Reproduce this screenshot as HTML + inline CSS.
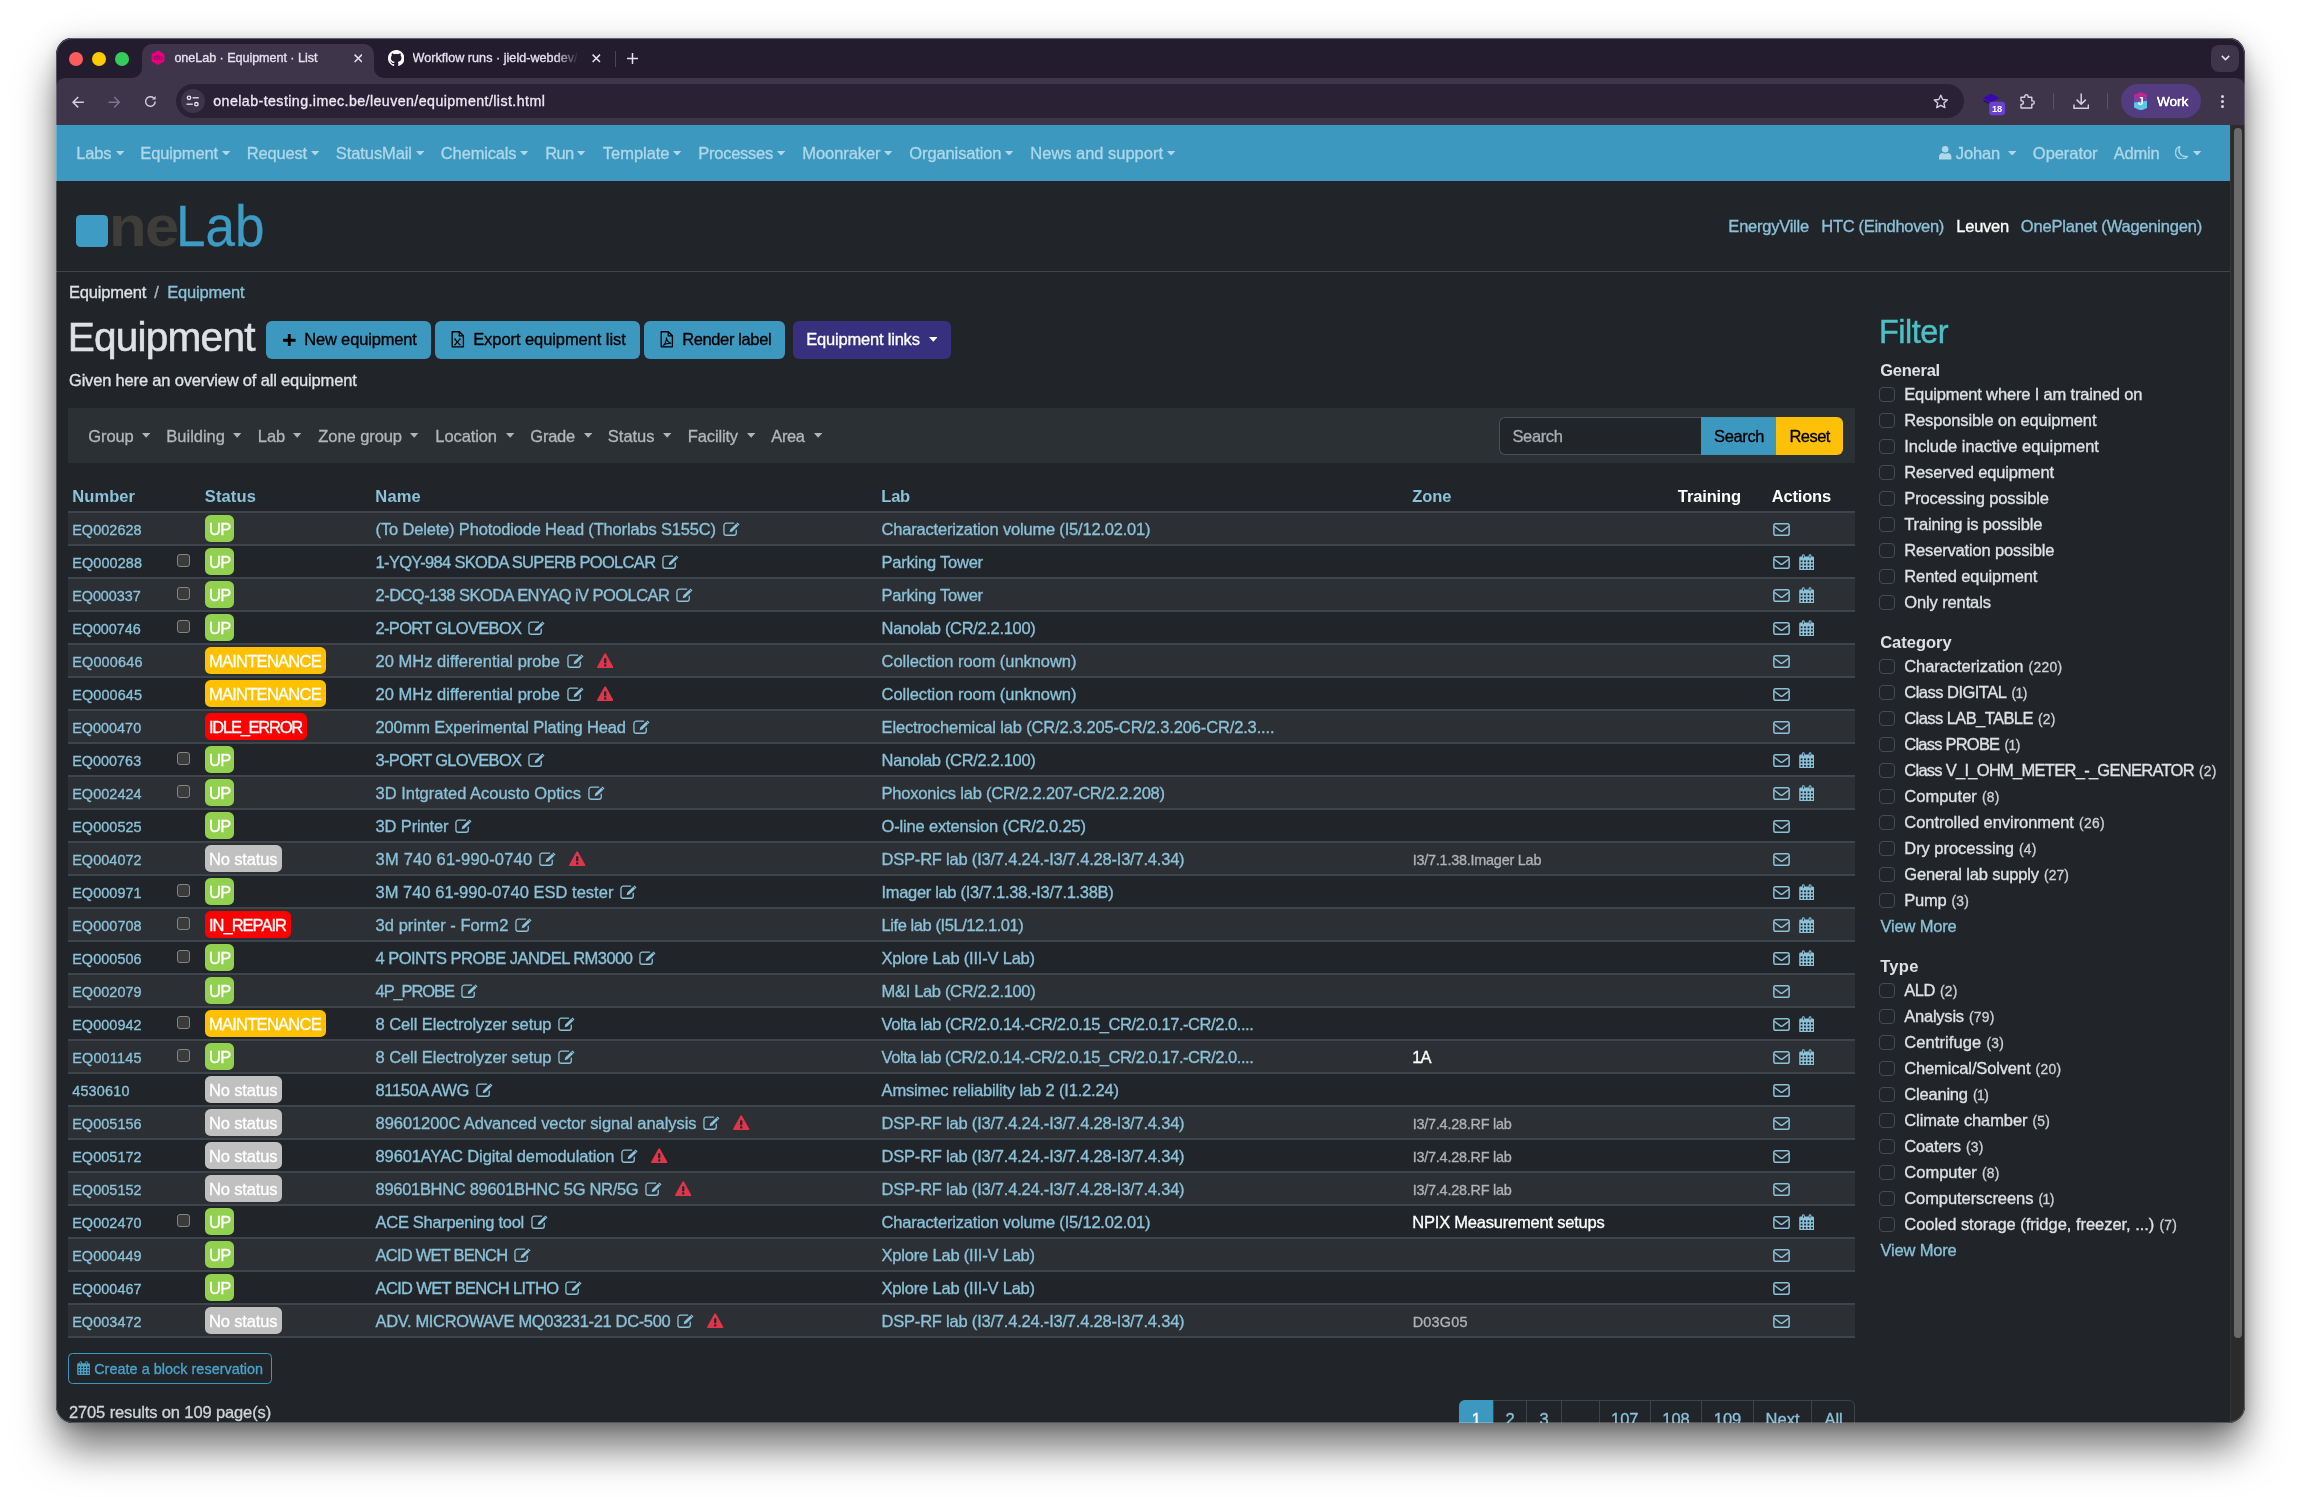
<!DOCTYPE html>
<html lang="en"><head><meta charset="utf-8"><title>oneLab · Equipment · List</title>
<style>
html,body{margin:0;padding:0;background:#fff;}
body{width:2301px;height:1497px;overflow:hidden;position:relative;font-family:"Liberation Sans",sans-serif;}
#shadow{position:absolute;left:56px;top:37.5px;width:2189px;height:1385.5px;border-radius:17px;background:#212529;
 box-shadow:0 28px 40px -2px rgba(0,0,0,.52),0 3px 12px rgba(0,0,0,.18),0 0 36px rgba(0,0,0,.08);}
#win{will-change:transform;position:absolute;left:0;top:0;width:2301px;height:1497px;overflow:hidden;
 clip-path:inset(37.5px 56px 74px 56px round 17px);}
#win div,#win .t,#win svg,#win table{position:absolute;}
.t{white-space:pre;margin:0;padding:0;font-weight:400;-webkit-text-stroke:.32px currentColor;}
a{text-decoration:none;}
.hl{left:68px;width:1787px;height:1px;background:#3f444a;border-top:1px solid rgba(65,70,76,.6);}
#rim{left:56px;top:37.5px;width:2189px;height:1385.5px;border-radius:17px;box-sizing:border-box;border:1px solid rgba(255,255,255,.23);pointer-events:none;}

</style></head>
<body>
<div id="shadow"></div>
<div id="win">
<div style="left:56px;top:37.5px;width:2189px;height:41px;background:#231b2e;"></div>
<div style="left:56px;top:37.5px;width:2189px;height:1px;background:rgba(255,255,255,.10);"></div>
<div style="left:56px;top:78px;width:2189px;height:47px;background:#3e354b;border-radius:9px 9px 0 0;"></div>
<div style="left:142.4px;top:44.2px;width:231.8px;height:34px;background:#3e354b;border-radius:10px 10px 0 0;"></div>
<svg style="left:132.4px;top:68px;" width="10" height="10" viewBox="0 0 10 10"><path d="M10 0v10H0A10 10 0 0 0 10 0z" fill="#3e354b"/></svg>
<svg style="left:374px;top:68px;" width="10" height="10" viewBox="0 0 10 10"><path d="M0 0v10h10A10 10 0 0 1 0 0z" fill="#3e354b"/></svg>
<div style="left:69.10000000000001px;top:51.5px;width:14.2px;height:14.2px;background:#fe5b5c;border-radius:50%;"></div>
<div style="left:92.0px;top:51.5px;width:14.2px;height:14.2px;background:#fbcb00;border-radius:50%;"></div>
<div style="left:114.9px;top:51.5px;width:14.2px;height:14.2px;background:#34cc5d;border-radius:50%;"></div>
<svg style="left:151.4px;top:50.2px;" width="14" height="15.4" viewBox="0 0 14 15.4"><path d="M7 .4 13.4 4v7.4L7 15 .6 11.4V4z" fill="#e6007e"/><text x="7" y="10.3" font-size="7.5" font-weight="700" text-anchor="middle" fill="#8e0a5c" font-family="Liberation Sans, sans-serif">db</text></svg>
<span class="t" style="left:174.40px;top:50px;font-size:12.6px;line-height:16px;color:#e6e1ee;letter-spacing:-0.051px;">oneLab · Equipment · List</span>
<svg style="left:353.6px;top:54.2px;" width="8.6" height="8.6" viewBox="0 0 8.6 8.6"><path d="M.6.6l7.4 7.4M8 .6L.6 8" stroke="#e6e1ee" stroke-width="1.5" fill="none"/></svg>
<svg style="left:388px;top:50.4px;" width="16.4" height="16.4" viewBox="0 0 16 16"><path fill="#fff" d="M8 0C3.58 0 0 3.58 0 8c0 3.54 2.29 6.53 5.47 7.59.4.07.55-.17.55-.38 0-.19-.01-.82-.01-1.49-2.01.37-2.53-.49-2.69-.94-.09-.23-.48-.94-.82-1.13-.28-.15-.68-.52-.01-.53.63-.01 1.08.58 1.23.82.72 1.21 1.87.87 2.33.66.07-.52.28-.87.51-1.07-1.78-.2-3.64-.89-3.64-3.95 0-.87.31-1.59.82-2.15-.08-.2-.36-1.02.08-2.12 0 0 .67-.21 2.2.82.64-.18 1.32-.27 2-.27s1.36.09 2 .27c1.53-1.04 2.2-.82 2.2-.82.44 1.1.16 1.92.08 2.12.51.56.82 1.27.82 2.15 0 3.07-1.87 3.75-3.65 3.95.29.25.54.73.54 1.48 0 1.07-.01 1.93-.01 2.2 0 .21.15.46.55.38A8.01 8.01 0 0 0 16 8c0-4.42-3.58-8-8-8z"/></svg>
<div style="left:412.5px;top:50px;width:166px;height:18px;overflow:hidden;-webkit-mask-image:linear-gradient(90deg,#000 86%,transparent 100%);mask-image:linear-gradient(90deg,#000 86%,transparent 100%);">
<span class="t" style="left:0.10px;top:0px;font-size:12.6px;line-height:16px;color:#e6e1ee;letter-spacing:0.024px;">Workflow runs · jield-webdev/</span>
</div>
<svg style="left:592.2px;top:54.2px;" width="8.6" height="8.6" viewBox="0 0 8.6 8.6"><path d="M.6.6l7.4 7.4M8 .6L.6 8" stroke="#e6e1ee" stroke-width="1.5" fill="none"/></svg>
<div style="left:614.5px;top:50.5px;width:1.2px;height:16px;background:#4d4459;"></div>
<svg style="left:626.5px;top:53px;" width="11" height="11" viewBox="0 0 11 11"><path d="M5.5 0v11M0 5.5h11" stroke="#e6e1ee" stroke-width="1.5" fill="none"/></svg>
<div style="left:2211px;top:44.6px;width:28px;height:27.6px;background:#3e354b;border-radius:8px;"></div>
<svg style="left:2220.5px;top:55.2px;" width="9" height="6" viewBox="0 0 9 6"><path d="M.8.9 4.5 4.6 8.2.9" stroke="#e6e1ee" stroke-width="1.5" fill="none"/></svg>
<svg style="left:72.2px;top:95.5px;" width="12.4" height="12.4" viewBox="0 0 12 12"><path d="M11.5 6H1.2M6 1 1 6l5 5" stroke="#d6cde3" stroke-width="1.45" fill="none"/></svg>
<svg style="left:107.8px;top:95.5px;" width="12.4" height="12.4" viewBox="0 0 12 12"><path d="M.5 6h10.3M6 1l5 5-5 5" stroke="#7d738c" stroke-width="1.45" fill="none"/></svg>
<svg style="left:143.6px;top:95px;" width="13" height="13" viewBox="0 0 13 13"><path d="M11.2 6.5A4.8 4.8 0 1 1 9.6 2.9" stroke="#d6cde3" stroke-width="1.45" fill="none"/><path d="M11.6.9v3.6H8z" fill="#d6cde3"/></svg>
<div style="left:176.4px;top:84.2px;width:1788px;height:33.4px;background:#2a2135;border-radius:17px;"></div>
<div style="left:180.9px;top:88.6px;width:24.4px;height:24.4px;background:#3e354b;border-radius:50%;"></div>
<svg style="left:186.4px;top:94.8px;" width="13.4" height="12" viewBox="0 0 13.4 12"><g stroke="#e6e1ee" stroke-width="1.35" fill="none"><circle cx="3" cy="2.8" r="1.7"/><path d="M6.6 2.8h6.2"/><circle cx="10.4" cy="9.2" r="1.7"/><path d="M.6 9.2h6.2"/></g></svg>
<span class="t" style="left:213.29px;top:92px;font-size:14.2px;line-height:18px;color:#ece8f2;letter-spacing:0.434px;">onelab-testing.imec.be/leuven/equipment/list.html</span>
<svg style="left:1933px;top:93.6px;" width="15.6" height="15" viewBox="0 0 15.6 15"><path d="M7.8 1.2l1.95 4.3 4.65.5-3.5 3.1 1 4.6-4.1-2.4-4.1 2.4 1-4.6L1.2 6l4.65-.5z" stroke="#d6cde3" stroke-width="1.35" fill="none" stroke-linejoin="round"/></svg>
<svg style="left:1982px;top:92.5px;" width="24" height="23" viewBox="0 0 24 23"><path d="M9 .8 17.4 5 9 9.4 .8 5z" fill="#3a06b4"/><path d="M2.6 6.9.8 8l8.2 4.3 3-1.6v-1.5L9 10.7z" fill="#2b0a86"/><rect x="7.2" y="8.7" width="15.8" height="13.6" rx="3" fill="#6b41d3"/><text x="15.1" y="19" font-size="9.3" font-weight="700" text-anchor="middle" fill="#fff" font-family="Liberation Sans, sans-serif">18</text></svg>
<svg style="left:2019px;top:92.6px;" width="17" height="17" viewBox="0 0 17 17"><path d="M2 4.2h3.7V3.4a1.7 1.7 0 0 1 3.4 0v.8h3.7v3.7h.8a1.7 1.7 0 0 1 0 3.4h-.8V15H2v-3.6h.6a1.8 1.8 0 0 0 0-3.6H2z" stroke="#d6cde3" stroke-width="1.4" fill="none" stroke-linejoin="round"/></svg>
<div style="left:2053.2px;top:93.4px;width:1.2px;height:15.6px;background:#5b516b;"></div>
<svg style="left:2072.6px;top:93px;" width="16.4" height="16.4" viewBox="0 0 16.4 16.4"><g stroke="#d6cde3" stroke-width="1.5" fill="none"><path d="M8.2.6v10.4M3.6 6.6l4.6 4.6 4.6-4.6"/><path d="M1 11.6v3.6h14.4v-3.6"/></g></svg>
<div style="left:2107px;top:93.4px;width:1.2px;height:15.6px;background:#5b516b;"></div>
<div style="left:2121px;top:84.2px;width:79.8px;height:34px;background:#533c80;border-radius:17px;"></div>
<svg style="left:2133.8px;top:91.8px;" width="13.6" height="18.6" viewBox="0 0 13.6 18.6"><path d="M6.8 0l6.8 3v5.6L0 10.4V3z" fill="#c2268f"/><path d="M0 5.4l13.6-1.2v4.4L0 10.4z" fill="#7f3fa6"/><path d="M0 10.4l13.6-1.8v7.2l-6.8 2.8L0 15.6z" fill="#58c8e6"/><text x="6.6" y="13.1" font-size="10.5" font-weight="700" text-anchor="middle" fill="#fff" font-family="Liberation Sans, sans-serif">J</text></svg>
<span class="t" style="left:2157.09px;top:93px;font-size:13.6px;line-height:17px;color:#fff;letter-spacing:-0.098px;text-shadow:0 0 .4px #fff;">Work</span>
<div style="left:2221.1px;top:94.6px;width:3px;height:3px;background:#ddd5ea;border-radius:50%;"></div>
<div style="left:2221.1px;top:100.0px;width:3px;height:3px;background:#ddd5ea;border-radius:50%;"></div>
<div style="left:2221.1px;top:105.4px;width:3px;height:3px;background:#ddd5ea;border-radius:50%;"></div>
<div style="left:2230px;top:125px;width:16px;height:1299px;background:#2b2b2b;"></div>
<div style="left:2230px;top:125px;width:1px;height:1299px;background:#353535;"></div>
<div style="left:2233.9px;top:128px;width:7.9px;height:1209.5px;background:#6b6b6b;border-radius:4px;"></div>
<div style="left:56px;top:125px;width:2174px;height:1299px;background:#212529;"></div>
<div style="left:56px;top:125px;width:2174px;height:56px;background:#3d98c0;"></div>
<span class="t" style="left:76.37px;top:143px;font-size:16.5px;line-height:20px;color:#afd7e8;letter-spacing:-0.176px;">Labs</span>
<svg style="left:115.85px;top:150.55px;" width="8.3" height="4.7" viewBox="0 0 8.3 4.7"><path d="M0 0h8.3L4.15 4.7z" fill="#afd7e8"/></svg>
<span class="t" style="left:140.37px;top:143px;font-size:16.5px;line-height:20px;color:#afd7e8;letter-spacing:-0.146px;">Equipment</span>
<svg style="left:221.85px;top:150.55px;" width="8.3" height="4.7" viewBox="0 0 8.3 4.7"><path d="M0 0h8.3L4.15 4.7z" fill="#afd7e8"/></svg>
<span class="t" style="left:246.87px;top:143px;font-size:16.5px;line-height:20px;color:#afd7e8;letter-spacing:-0.199px;">Request</span>
<svg style="left:310.85px;top:150.55px;" width="8.3" height="4.7" viewBox="0 0 8.3 4.7"><path d="M0 0h8.3L4.15 4.7z" fill="#afd7e8"/></svg>
<span class="t" style="left:335.87px;top:143px;font-size:16.5px;line-height:20px;color:#afd7e8;letter-spacing:-0.095px;">StatusMail</span>
<svg style="left:415.85px;top:150.55px;" width="8.3" height="4.7" viewBox="0 0 8.3 4.7"><path d="M0 0h8.3L4.15 4.7z" fill="#afd7e8"/></svg>
<span class="t" style="left:440.87px;top:143px;font-size:16.5px;line-height:20px;color:#afd7e8;letter-spacing:-0.162px;">Chemicals</span>
<svg style="left:520.35px;top:150.55px;" width="8.3" height="4.7" viewBox="0 0 8.3 4.7"><path d="M0 0h8.3L4.15 4.7z" fill="#afd7e8"/></svg>
<span class="t" style="left:545.37px;top:143px;font-size:16.5px;line-height:20px;color:#afd7e8;letter-spacing:-0.735px;">Run</span>
<svg style="left:577.35px;top:150.55px;" width="8.3" height="4.7" viewBox="0 0 8.3 4.7"><path d="M0 0h8.3L4.15 4.7z" fill="#afd7e8"/></svg>
<span class="t" style="left:602.87px;top:143px;font-size:16.5px;line-height:20px;color:#afd7e8;letter-spacing:-0.047px;">Template</span>
<svg style="left:673.35px;top:150.55px;" width="8.3" height="4.7" viewBox="0 0 8.3 4.7"><path d="M0 0h8.3L4.15 4.7z" fill="#afd7e8"/></svg>
<span class="t" style="left:698.37px;top:143px;font-size:16.5px;line-height:20px;color:#afd7e8;letter-spacing:-0.273px;">Processes</span>
<svg style="left:776.85px;top:150.55px;" width="8.3" height="4.7" viewBox="0 0 8.3 4.7"><path d="M0 0h8.3L4.15 4.7z" fill="#afd7e8"/></svg>
<span class="t" style="left:802.37px;top:143px;font-size:16.5px;line-height:20px;color:#afd7e8;letter-spacing:-0.089px;">Moonraker</span>
<svg style="left:884.35px;top:150.55px;" width="8.3" height="4.7" viewBox="0 0 8.3 4.7"><path d="M0 0h8.3L4.15 4.7z" fill="#afd7e8"/></svg>
<span class="t" style="left:909.37px;top:143px;font-size:16.5px;line-height:20px;color:#afd7e8;letter-spacing:-0.124px;">Organisation</span>
<svg style="left:1005.35px;top:150.55px;" width="8.3" height="4.7" viewBox="0 0 8.3 4.7"><path d="M0 0h8.3L4.15 4.7z" fill="#afd7e8"/></svg>
<span class="t" style="left:1030.37px;top:143px;font-size:16.5px;line-height:20px;color:#afd7e8;letter-spacing:-0.026px;">News and support</span>
<svg style="left:1166.85px;top:150.55px;" width="8.3" height="4.7" viewBox="0 0 8.3 4.7"><path d="M0 0h8.3L4.15 4.7z" fill="#afd7e8"/></svg>
<svg style="left:1939.2px;top:146.2px;" width="12.4" height="13.4" viewBox="0 0 12.4 13.4"><circle cx="6.2" cy="3.3" r="3.3" fill="#afd7e8"/><path d="M0 13.4v-2.6C0 8.4 1.7 6.9 3.6 6.9c.7.5 1.6.8 2.6.8s1.9-.3 2.6-.8c1.9 0 3.6 1.5 3.6 3.9v2.6z" fill="#afd7e8"/></svg>
<span class="t" style="left:1955.87px;top:143px;font-size:16.5px;line-height:20px;color:#afd7e8;letter-spacing:-0.178px;">Johan</span>
<svg style="left:2007.85px;top:150.55px;" width="8.3" height="4.7" viewBox="0 0 8.3 4.7"><path d="M0 0h8.3L4.15 4.7z" fill="#afd7e8"/></svg>
<span class="t" style="left:2032.87px;top:143px;font-size:16.5px;line-height:20px;color:#afd7e8;letter-spacing:-0.068px;">Operator</span>
<span class="t" style="left:2113.87px;top:143px;font-size:16.5px;line-height:20px;color:#afd7e8;letter-spacing:-0.241px;">Admin</span>
<svg style="left:2175px;top:145.6px;" width="13.6" height="13.6" viewBox="0 0 16 16"><path fill="#afd7e8" stroke="#afd7e8" stroke-width=".7" d="M6 .278a.77.77 0 0 1 .08.858 7.2 7.2 0 0 0-.878 3.46c0 4.021 3.278 7.277 7.318 7.277q.792-.001 1.533-.16a.79.79 0 0 1 .81.316.73.73 0 0 1-.031.893A8.35 8.35 0 0 1 8.344 16C3.734 16 0 12.286 0 7.71 0 4.266 2.114 1.312 5.124.06A.75.75 0 0 1 6 .278M4.858 1.311A7.27 7.27 0 0 0 1.025 7.71c0 4.02 3.279 7.276 7.319 7.276a7.32 7.32 0 0 0 5.205-2.162q-.506.063-1.029.063c-4.61 0-8.343-3.714-8.343-8.29 0-1.167.242-2.278.681-3.286"/></svg>
<svg style="left:2193.35px;top:150.55px;" width="8.3" height="4.7" viewBox="0 0 8.3 4.7"><path d="M0 0h8.3L4.15 4.7z" fill="#afd7e8"/></svg>
<div style="left:76px;top:214.6px;width:32px;height:32px;background:#3d9bc4;border-radius:4.5px;"></div>
<span class="t" style="left:108.80px;top:193px;font-size:57.5px;line-height:66px;color:#3f3d3a;font-weight:700;-webkit-text-stroke:0;transform:scaleX(1.07);transform-origin:0 0;letter-spacing:-1.5px;">ne</span>
<span class="t" style="left:176.40px;top:193px;font-size:57.2px;line-height:66px;color:#3d9bc4;transform:scaleX(.927);transform-origin:0 0;">Lab</span>
<span class="t" style="left:1728.37px;top:216px;font-size:16.5px;line-height:20px;color:#8bc1d9;letter-spacing:-0.236px;">EnergyVille</span>
<span class="t" style="left:1821.37px;top:216px;font-size:16.5px;line-height:20px;color:#8bc1d9;letter-spacing:-0.326px;">HTC (Eindhoven)</span>
<span class="t" style="left:1956.37px;top:216px;font-size:16.5px;line-height:20px;color:#fff;letter-spacing:-0.261px;">Leuven</span>
<span class="t" style="left:2020.87px;top:216px;font-size:16.5px;line-height:20px;color:#8bc1d9;letter-spacing:-0.205px;">OnePlanet (Wageningen)</span>
<div style="left:56px;top:270.5px;width:2174px;height:1px;background:#41464b;"></div>
<span class="t" style="left:68.97px;top:282px;font-size:16.5px;line-height:20px;color:#dee2e6;letter-spacing:-0.190px;">Equipment</span>
<span class="t" style="left:154.20px;top:282px;font-size:16.5px;line-height:20px;color:#adb5bd;">/</span>
<span class="t" style="left:167.27px;top:282px;font-size:16.5px;line-height:20px;color:#8bc1d9;letter-spacing:-0.190px;">Equipment</span>
<h1 class="t" style="left:67.68px;top:313px;font-size:40.6px;line-height:48px;color:#dee2e6;letter-spacing:-0.775px;-webkit-text-stroke:.55px #dee2e6;">Equipment</h1>
<div style="left:266px;top:320.5px;width:165px;height:38px;background:#3d98c0;border-radius:6px;"></div>
<span class="t" style="left:304.17px;top:329px;font-size:16.5px;line-height:20px;color:#000;letter-spacing:-0.160px;">New equipment</span>
<svg style="left:283.2px;top:333.6px;" width="12.6" height="12.6" viewBox="0 0 12.6 12.6"><path d="M6.3 0v12.6M0 6.3h12.6" stroke="#000" stroke-width="2.9"/></svg>
<div style="left:435px;top:320.5px;width:205px;height:38px;background:#3d98c0;border-radius:6px;"></div>
<span class="t" style="left:473.17px;top:329px;font-size:16.5px;line-height:20px;color:#000;letter-spacing:-0.071px;">Export equipment list</span>
<div style="left:644px;top:320.5px;width:141px;height:38px;background:#3d98c0;border-radius:6px;"></div>
<span class="t" style="left:682.17px;top:329px;font-size:16.5px;line-height:20px;color:#000;letter-spacing:-0.374px;">Render label</span>
<svg style="left:451px;top:331.2px;" width="13.6" height="16.6" viewBox="0 0 12.6 15.4"><path d="M1.1.7h6.7l3.7 3.7v10.3H1.1z" stroke="#000" stroke-width="1.2" fill="none" stroke-linejoin="round"/><path d="M7.6.9v3.7h3.7" stroke="#000" stroke-width="1.1" fill="none"/><path d="M3.6 7.6l4.6 5.2M8.2 7.6l-4.6 5.2M3 7.6h1.6M7.4 7.6H9M3 12.8h1.6M7.4 12.8H9" stroke="#000" stroke-width="1.05" fill="none"/></svg>
<svg style="left:660px;top:331.2px;" width="13.6" height="16.6" viewBox="0 0 12.6 15.4"><path d="M1.1.7h6.7l3.7 3.7v10.3H1.1z" stroke="#000" stroke-width="1.2" fill="none" stroke-linejoin="round"/><path d="M7.6.9v3.7h3.7" stroke="#000" stroke-width="1.1" fill="none"/><path d="M5.9 6.2c.5 2.4 1.6 4.4 4.2 5.2-2.300-.2-5.200.6-7.200 2.100 1.700-1.400 3.100-4.500 3-7.300z" stroke="#000" stroke-width=".95" fill="none" stroke-linejoin="round"/></svg>
<div style="left:793px;top:320.5px;width:158px;height:38px;background:#37307e;border-radius:6px;"></div>
<span class="t" style="left:806.17px;top:329px;font-size:16.5px;line-height:20px;color:#fff;letter-spacing:-0.194px;">Equipment links</span>
<svg style="left:928.7px;top:336.95px;" width="8.6" height="4.7" viewBox="0 0 8.6 4.7"><path d="M0 0h8.6L4.3 4.7z" fill="#fff"/></svg>
<span class="t" style="left:68.97px;top:370px;font-size:16.5px;line-height:20px;color:#dee2e6;letter-spacing:-0.175px;">Given here an overview of all equipment</span>
<div style="left:68px;top:408px;width:1787px;height:55px;background:#2b3035;"></div>
<span class="t" style="left:88.37px;top:426px;font-size:16.5px;line-height:20px;color:#b2b5b8;letter-spacing:-0.156px;">Group</span>
<svg style="left:141.85px;top:433.15px;" width="8.3" height="4.7" viewBox="0 0 8.3 4.7"><path d="M0 0h8.3L4.15 4.7z" fill="#b2b5b8"/></svg>
<span class="t" style="left:166.37px;top:426px;font-size:16.5px;line-height:20px;color:#b2b5b8;letter-spacing:-0.018px;">Building</span>
<svg style="left:233.35px;top:433.15px;" width="8.3" height="4.7" viewBox="0 0 8.3 4.7"><path d="M0 0h8.3L4.15 4.7z" fill="#b2b5b8"/></svg>
<span class="t" style="left:257.87px;top:426px;font-size:16.5px;line-height:20px;color:#b2b5b8;letter-spacing:-0.151px;">Lab</span>
<svg style="left:293.35px;top:433.15px;" width="8.3" height="4.7" viewBox="0 0 8.3 4.7"><path d="M0 0h8.3L4.15 4.7z" fill="#b2b5b8"/></svg>
<span class="t" style="left:318.37px;top:426px;font-size:16.5px;line-height:20px;color:#b2b5b8;letter-spacing:-0.083px;">Zone group</span>
<svg style="left:410.35px;top:433.15px;" width="8.3" height="4.7" viewBox="0 0 8.3 4.7"><path d="M0 0h8.3L4.15 4.7z" fill="#b2b5b8"/></svg>
<span class="t" style="left:435.37px;top:426px;font-size:16.5px;line-height:20px;color:#b2b5b8;letter-spacing:-0.102px;">Location</span>
<svg style="left:505.85px;top:433.15px;" width="8.3" height="4.7" viewBox="0 0 8.3 4.7"><path d="M0 0h8.3L4.15 4.7z" fill="#b2b5b8"/></svg>
<span class="t" style="left:530.37px;top:426px;font-size:16.5px;line-height:20px;color:#b2b5b8;letter-spacing:-0.256px;">Grade</span>
<svg style="left:583.85px;top:433.15px;" width="8.3" height="4.7" viewBox="0 0 8.3 4.7"><path d="M0 0h8.3L4.15 4.7z" fill="#b2b5b8"/></svg>
<span class="t" style="left:607.87px;top:426px;font-size:16.5px;line-height:20px;color:#b2b5b8;letter-spacing:-0.034px;">Status</span>
<svg style="left:662.85px;top:433.15px;" width="8.3" height="4.7" viewBox="0 0 8.3 4.7"><path d="M0 0h8.3L4.15 4.7z" fill="#b2b5b8"/></svg>
<span class="t" style="left:687.87px;top:426px;font-size:16.5px;line-height:20px;color:#b2b5b8;letter-spacing:-0.158px;">Facility</span>
<svg style="left:746.85px;top:433.15px;" width="8.3" height="4.7" viewBox="0 0 8.3 4.7"><path d="M0 0h8.3L4.15 4.7z" fill="#b2b5b8"/></svg>
<span class="t" style="left:771.37px;top:426px;font-size:16.5px;line-height:20px;color:#b2b5b8;letter-spacing:-0.445px;">Area</span>
<svg style="left:813.85px;top:433.15px;" width="8.3" height="4.7" viewBox="0 0 8.3 4.7"><path d="M0 0h8.3L4.15 4.7z" fill="#b2b5b8"/></svg>
<div style="left:1499px;top:416.5px;width:202.5px;height:38.2px;background:#212529;border:1px solid #495057;border-right:0;border-radius:6px 0 0 6px;box-sizing:border-box;"></div>
<span class="t" style="left:1512.47px;top:426px;font-size:16.5px;line-height:20px;color:#a9aeb3;letter-spacing:-0.367px;">Search</span>
<div style="left:1701px;top:416.5px;width:75.5px;height:38.2px;background:#3d98c0;"></div>
<span class="t" style="left:1714.07px;top:426px;font-size:16.5px;line-height:20px;color:#000;letter-spacing:-0.367px;">Search</span>
<div style="left:1776.3px;top:416.5px;width:67px;height:38.2px;background:#ffc107;border-radius:0 6px 6px 0;"></div>
<span class="t" style="left:1789.47px;top:426px;font-size:16.5px;line-height:20px;color:#000;letter-spacing:-0.546px;">Reset</span>
<b class="t" style="left:72.37px;top:486px;font-size:16.5px;line-height:20px;color:#8bc1d9;font-weight:700;-webkit-text-stroke:0;letter-spacing:0.039px;">Number</b>
<b class="t" style="left:204.87px;top:486px;font-size:16.5px;line-height:20px;color:#8bc1d9;font-weight:700;-webkit-text-stroke:0;letter-spacing:0.107px;">Status</b>
<b class="t" style="left:375.37px;top:486px;font-size:16.5px;line-height:20px;color:#8bc1d9;font-weight:700;-webkit-text-stroke:0;letter-spacing:0.156px;">Name</b>
<b class="t" style="left:881.37px;top:486px;font-size:16.5px;line-height:20px;color:#8bc1d9;font-weight:700;-webkit-text-stroke:0;letter-spacing:-0.255px;">Lab</b>
<b class="t" style="left:1412.37px;top:486px;font-size:16.5px;line-height:20px;color:#8bc1d9;font-weight:700;-webkit-text-stroke:0;letter-spacing:-0.086px;">Zone</b>
<b class="t" style="left:1677.87px;top:486px;font-size:16.5px;line-height:20px;color:#fff;font-weight:700;-webkit-text-stroke:0;letter-spacing:-0.137px;">Training</b>
<b class="t" style="left:1771.87px;top:486px;font-size:16.5px;line-height:20px;color:#fff;font-weight:700;-webkit-text-stroke:0;letter-spacing:-0.205px;">Actions</b>
<div class="hl" style="top:511px"></div>
<div style="left:68px;top:513px;width:1787px;height:32px;background:#2c3034;"></div>
<div class="hl" style="top:544px"></div>
<span class="t" style="left:72.18px;top:521px;font-size:14.4px;line-height:18px;color:#8bc1d9;letter-spacing:0.086px;">EQ002628</span>
<div style="left:205px;top:515px;width:29.2px;height:27px;background:#92d050;border-radius:5.6px;"></div>
<span class="t" style="left:208.97px;top:519px;font-size:16.5px;line-height:20px;color:#fff;letter-spacing:-0.722px;">UP</span>
<span class="t" style="left:375.57px;top:519px;font-size:16.5px;line-height:20px;color:#8bc1d9;letter-spacing:-0.165px;">(To Delete) Photodiode Head (Thorlabs S155C)</span>
<svg style="left:722.75px;top:521.8px;" width="17" height="14" viewBox="0 0 17 14"><path d="M10.600 1.150H3.300A2.350 2.350 0 0 0 .95 3.500v7.400a2.350 2.350 0 0 0 2.350 2.350h7.600a2.350 2.350 0 0 0 2.350-2.350V8.200" stroke="#8bc1d9" stroke-width="1.3" fill="none" stroke-linecap="round"/><path d="M14.500.400l2 2-7.200 7.200-2.700.700.700-2.700z" fill="#8bc1d9"/><path d="M13.400 1.600l1.900 1.900" stroke="#262a2e" stroke-width=".7"/></svg>
<span class="t" style="left:881.57px;top:519px;font-size:16.5px;line-height:20px;color:#8bc1d9;letter-spacing:-0.196px;">Characterization volume (I5/12.02.01)</span>
<svg style="left:1773.2px;top:523px;" width="17" height="13.2" viewBox="0 0 17 13.2"><rect x=".85" y=".85" width="15.3" height="11.5" rx="1.8" stroke="#8bc1d9" stroke-width="1.5" fill="none"/><path d="M1.2 3.2l6.2 4.7a1.9 1.9 0 0 0 2.2 0l6.2-4.7" stroke="#8bc1d9" stroke-width="1.4" fill="none"/></svg>
<div class="hl" style="top:577px"></div>
<span class="t" style="left:72.18px;top:554px;font-size:14.4px;line-height:18px;color:#8bc1d9;letter-spacing:0.149px;">EQ000288</span>
<div style="left:177.2px;top:554px;width:13px;height:13px;background:#3b3b3b;border:1px solid #858585;border-radius:3px;box-sizing:border-box;"></div>
<div style="left:205px;top:548px;width:29.2px;height:27px;background:#92d050;border-radius:5.6px;"></div>
<span class="t" style="left:208.97px;top:552px;font-size:16.5px;line-height:20px;color:#fff;letter-spacing:-0.722px;">UP</span>
<span class="t" style="left:375.57px;top:552px;font-size:16.5px;line-height:20px;color:#8bc1d9;letter-spacing:-0.679px;">1-YQY-984 SKODA SUPERB POOLCAR</span>
<svg style="left:662.25px;top:554.8px;" width="17" height="14" viewBox="0 0 17 14"><path d="M10.600 1.150H3.300A2.350 2.350 0 0 0 .95 3.500v7.400a2.350 2.350 0 0 0 2.350 2.350h7.600a2.350 2.350 0 0 0 2.350-2.350V8.200" stroke="#8bc1d9" stroke-width="1.3" fill="none" stroke-linecap="round"/><path d="M14.500.400l2 2-7.200 7.200-2.700.700.700-2.700z" fill="#8bc1d9"/><path d="M13.400 1.600l1.900 1.900" stroke="#262a2e" stroke-width=".7"/></svg>
<span class="t" style="left:881.57px;top:552px;font-size:16.5px;line-height:20px;color:#8bc1d9;letter-spacing:-0.225px;">Parking Tower</span>
<svg style="left:1773.2px;top:556px;" width="17" height="13.2" viewBox="0 0 17 13.2"><rect x=".85" y=".85" width="15.3" height="11.5" rx="1.8" stroke="#8bc1d9" stroke-width="1.5" fill="none"/><path d="M1.2 3.2l6.2 4.7a1.9 1.9 0 0 0 2.2 0l6.2-4.7" stroke="#8bc1d9" stroke-width="1.4" fill="none"/></svg>
<svg style="left:1798.6px;top:553.7px;" width="15.4" height="16.6" viewBox="0 0 15.4 16.6"><path d="M1.5 2.6h12.4a1.3 1.3 0 0 1 1.3 1.3v11.2a1.3 1.3 0 0 1-1.3 1.300H1.500A1.300 1.300 0 0 1 .2 15.100V3.900a1.300 1.300 0 0 1 1.300-1.300z" fill="#8bc1d9"/><rect x="3" y=".2" width="2.7" height="4.6" rx="1.3" fill="#8bc1d9"/><rect x="9.7" y=".2" width="2.7" height="4.6" rx="1.3" fill="#8bc1d9"/><rect x="3.95" y="1.3" width=".8" height="2.6" rx=".4" fill="#1b1e21"/><rect x="10.65" y="1.3" width=".8" height="2.6" rx=".4" fill="#1b1e21"/><rect x="1.70" y="6.40" width="1.75" height="1.75" fill="#1b1e21"/><rect x="5.15" y="6.40" width="1.75" height="1.75" fill="#1b1e21"/><rect x="8.60" y="6.40" width="1.75" height="1.75" fill="#1b1e21"/><rect x="12.05" y="6.40" width="1.75" height="1.75" fill="#1b1e21"/><rect x="1.70" y="9.70" width="1.75" height="1.75" fill="#1b1e21"/><rect x="5.15" y="9.70" width="1.75" height="1.75" fill="#1b1e21"/><rect x="8.60" y="9.70" width="1.75" height="1.75" fill="#1b1e21"/><rect x="12.05" y="9.70" width="1.75" height="1.75" fill="#1b1e21"/><rect x="1.70" y="13.00" width="1.75" height="1.75" fill="#1b1e21"/><rect x="5.15" y="13.00" width="1.75" height="1.75" fill="#1b1e21"/><rect x="8.60" y="13.00" width="1.75" height="1.75" fill="#1b1e21"/><rect x="12.05" y="13.00" width="1.75" height="1.75" fill="#1b1e21"/></svg>
<div style="left:68px;top:579px;width:1787px;height:32px;background:#2c3034;"></div>
<div class="hl" style="top:610px"></div>
<span class="t" style="left:72.18px;top:587px;font-size:14.4px;line-height:18px;color:#8bc1d9;letter-spacing:-0.039px;">EQ000337</span>
<div style="left:177.2px;top:587px;width:13px;height:13px;background:#3b3b3b;border:1px solid #858585;border-radius:3px;box-sizing:border-box;"></div>
<div style="left:205px;top:581px;width:29.2px;height:27px;background:#92d050;border-radius:5.6px;"></div>
<span class="t" style="left:208.97px;top:585px;font-size:16.5px;line-height:20px;color:#fff;letter-spacing:-0.722px;">UP</span>
<span class="t" style="left:375.57px;top:585px;font-size:16.5px;line-height:20px;color:#8bc1d9;letter-spacing:-0.551px;">2-DCQ-138 SKODA ENYAQ iV POOLCAR</span>
<svg style="left:676.25px;top:587.8px;" width="17" height="14" viewBox="0 0 17 14"><path d="M10.600 1.150H3.300A2.350 2.350 0 0 0 .95 3.500v7.400a2.350 2.350 0 0 0 2.350 2.350h7.600a2.350 2.350 0 0 0 2.350-2.350V8.200" stroke="#8bc1d9" stroke-width="1.3" fill="none" stroke-linecap="round"/><path d="M14.500.400l2 2-7.200 7.200-2.700.700.700-2.700z" fill="#8bc1d9"/><path d="M13.400 1.600l1.900 1.900" stroke="#262a2e" stroke-width=".7"/></svg>
<span class="t" style="left:881.57px;top:585px;font-size:16.5px;line-height:20px;color:#8bc1d9;letter-spacing:-0.225px;">Parking Tower</span>
<svg style="left:1773.2px;top:589px;" width="17" height="13.2" viewBox="0 0 17 13.2"><rect x=".85" y=".85" width="15.3" height="11.5" rx="1.8" stroke="#8bc1d9" stroke-width="1.5" fill="none"/><path d="M1.2 3.2l6.2 4.7a1.9 1.9 0 0 0 2.2 0l6.2-4.7" stroke="#8bc1d9" stroke-width="1.4" fill="none"/></svg>
<svg style="left:1798.6px;top:586.7px;" width="15.4" height="16.6" viewBox="0 0 15.4 16.6"><path d="M1.5 2.6h12.4a1.3 1.3 0 0 1 1.3 1.3v11.2a1.3 1.3 0 0 1-1.3 1.300H1.500A1.300 1.300 0 0 1 .2 15.100V3.900a1.300 1.300 0 0 1 1.300-1.300z" fill="#8bc1d9"/><rect x="3" y=".2" width="2.7" height="4.6" rx="1.3" fill="#8bc1d9"/><rect x="9.7" y=".2" width="2.7" height="4.6" rx="1.3" fill="#8bc1d9"/><rect x="3.95" y="1.3" width=".8" height="2.6" rx=".4" fill="#1b1e21"/><rect x="10.65" y="1.3" width=".8" height="2.6" rx=".4" fill="#1b1e21"/><rect x="1.70" y="6.40" width="1.75" height="1.75" fill="#1b1e21"/><rect x="5.15" y="6.40" width="1.75" height="1.75" fill="#1b1e21"/><rect x="8.60" y="6.40" width="1.75" height="1.75" fill="#1b1e21"/><rect x="12.05" y="6.40" width="1.75" height="1.75" fill="#1b1e21"/><rect x="1.70" y="9.70" width="1.75" height="1.75" fill="#1b1e21"/><rect x="5.15" y="9.70" width="1.75" height="1.75" fill="#1b1e21"/><rect x="8.60" y="9.70" width="1.75" height="1.75" fill="#1b1e21"/><rect x="12.05" y="9.70" width="1.75" height="1.75" fill="#1b1e21"/><rect x="1.70" y="13.00" width="1.75" height="1.75" fill="#1b1e21"/><rect x="5.15" y="13.00" width="1.75" height="1.75" fill="#1b1e21"/><rect x="8.60" y="13.00" width="1.75" height="1.75" fill="#1b1e21"/><rect x="12.05" y="13.00" width="1.75" height="1.75" fill="#1b1e21"/></svg>
<div class="hl" style="top:643px"></div>
<span class="t" style="left:72.18px;top:620px;font-size:14.4px;line-height:18px;color:#8bc1d9;letter-spacing:-0.039px;">EQ000746</span>
<div style="left:177.2px;top:620px;width:13px;height:13px;background:#3b3b3b;border:1px solid #858585;border-radius:3px;box-sizing:border-box;"></div>
<div style="left:205px;top:614px;width:29.2px;height:27px;background:#92d050;border-radius:5.6px;"></div>
<span class="t" style="left:208.97px;top:618px;font-size:16.5px;line-height:20px;color:#fff;letter-spacing:-0.722px;">UP</span>
<span class="t" style="left:375.57px;top:618px;font-size:16.5px;line-height:20px;color:#8bc1d9;letter-spacing:-0.692px;">2-PORT GLOVEBOX</span>
<svg style="left:528.25px;top:620.8px;" width="17" height="14" viewBox="0 0 17 14"><path d="M10.600 1.150H3.300A2.350 2.350 0 0 0 .95 3.500v7.400a2.350 2.350 0 0 0 2.350 2.350h7.600a2.350 2.350 0 0 0 2.350-2.350V8.200" stroke="#8bc1d9" stroke-width="1.3" fill="none" stroke-linecap="round"/><path d="M14.500.400l2 2-7.200 7.200-2.700.700.700-2.700z" fill="#8bc1d9"/><path d="M13.400 1.600l1.900 1.900" stroke="#262a2e" stroke-width=".7"/></svg>
<span class="t" style="left:881.57px;top:618px;font-size:16.5px;line-height:20px;color:#8bc1d9;letter-spacing:-0.334px;">Nanolab (CR/2.2.100)</span>
<svg style="left:1773.2px;top:622px;" width="17" height="13.2" viewBox="0 0 17 13.2"><rect x=".85" y=".85" width="15.3" height="11.5" rx="1.8" stroke="#8bc1d9" stroke-width="1.5" fill="none"/><path d="M1.2 3.2l6.2 4.7a1.9 1.9 0 0 0 2.2 0l6.2-4.7" stroke="#8bc1d9" stroke-width="1.4" fill="none"/></svg>
<svg style="left:1798.6px;top:619.7px;" width="15.4" height="16.6" viewBox="0 0 15.4 16.6"><path d="M1.5 2.6h12.4a1.3 1.3 0 0 1 1.3 1.3v11.2a1.3 1.3 0 0 1-1.3 1.300H1.500A1.300 1.300 0 0 1 .2 15.100V3.900a1.300 1.300 0 0 1 1.300-1.300z" fill="#8bc1d9"/><rect x="3" y=".2" width="2.7" height="4.6" rx="1.3" fill="#8bc1d9"/><rect x="9.7" y=".2" width="2.7" height="4.6" rx="1.3" fill="#8bc1d9"/><rect x="3.95" y="1.3" width=".8" height="2.6" rx=".4" fill="#1b1e21"/><rect x="10.65" y="1.3" width=".8" height="2.6" rx=".4" fill="#1b1e21"/><rect x="1.70" y="6.40" width="1.75" height="1.75" fill="#1b1e21"/><rect x="5.15" y="6.40" width="1.75" height="1.75" fill="#1b1e21"/><rect x="8.60" y="6.40" width="1.75" height="1.75" fill="#1b1e21"/><rect x="12.05" y="6.40" width="1.75" height="1.75" fill="#1b1e21"/><rect x="1.70" y="9.70" width="1.75" height="1.75" fill="#1b1e21"/><rect x="5.15" y="9.70" width="1.75" height="1.75" fill="#1b1e21"/><rect x="8.60" y="9.70" width="1.75" height="1.75" fill="#1b1e21"/><rect x="12.05" y="9.70" width="1.75" height="1.75" fill="#1b1e21"/><rect x="1.70" y="13.00" width="1.75" height="1.75" fill="#1b1e21"/><rect x="5.15" y="13.00" width="1.75" height="1.75" fill="#1b1e21"/><rect x="8.60" y="13.00" width="1.75" height="1.75" fill="#1b1e21"/><rect x="12.05" y="13.00" width="1.75" height="1.75" fill="#1b1e21"/></svg>
<div style="left:68px;top:645px;width:1787px;height:32px;background:#2c3034;"></div>
<div class="hl" style="top:676px"></div>
<span class="t" style="left:72.18px;top:653px;font-size:14.4px;line-height:18px;color:#8bc1d9;letter-spacing:0.211px;">EQ000646</span>
<div style="left:205px;top:647px;width:120.5px;height:27px;background:#ffc000;border-radius:5.6px;"></div>
<span class="t" style="left:208.97px;top:651px;font-size:16.5px;line-height:20px;color:#fff;letter-spacing:-0.738px;">MAINTENANCE</span>
<span class="t" style="left:375.57px;top:651px;font-size:16.5px;line-height:20px;color:#8bc1d9;letter-spacing:0.011px;">20 MHz differential probe</span>
<svg style="left:566.75px;top:653.8px;" width="17" height="14" viewBox="0 0 17 14"><path d="M10.600 1.150H3.300A2.350 2.350 0 0 0 .95 3.500v7.400a2.350 2.350 0 0 0 2.350 2.350h7.600a2.350 2.350 0 0 0 2.350-2.350V8.200" stroke="#8bc1d9" stroke-width="1.3" fill="none" stroke-linecap="round"/><path d="M14.500.400l2 2-7.200 7.200-2.700.700.700-2.700z" fill="#8bc1d9"/><path d="M13.400 1.600l1.900 1.900" stroke="#262a2e" stroke-width=".7"/></svg>
<svg style="left:596.8499999999999px;top:652.9px;" width="16.4" height="15.6" viewBox="0 0 16.4 15.6"><path d="M8.200 1.200L15.400 14.300H1z" fill="#e0354a" stroke="#e0354a" stroke-width="1.8" stroke-linejoin="round"/><rect x="7.050" y="5.200" width="2.300" height="5.100" rx=".5" fill="#24282c"/><rect x="7.050" y="11.300" width="2.300" height="2.100" rx=".4" fill="#24282c"/></svg>
<span class="t" style="left:881.57px;top:651px;font-size:16.5px;line-height:20px;color:#8bc1d9;letter-spacing:-0.058px;">Collection room (unknown)</span>
<svg style="left:1773.2px;top:655px;" width="17" height="13.2" viewBox="0 0 17 13.2"><rect x=".85" y=".85" width="15.3" height="11.5" rx="1.8" stroke="#8bc1d9" stroke-width="1.5" fill="none"/><path d="M1.2 3.2l6.2 4.7a1.9 1.9 0 0 0 2.2 0l6.2-4.7" stroke="#8bc1d9" stroke-width="1.4" fill="none"/></svg>
<div class="hl" style="top:709px"></div>
<span class="t" style="left:72.18px;top:686px;font-size:14.4px;line-height:18px;color:#8bc1d9;letter-spacing:0.149px;">EQ000645</span>
<div style="left:205px;top:680px;width:120.5px;height:27px;background:#ffc000;border-radius:5.6px;"></div>
<span class="t" style="left:208.97px;top:684px;font-size:16.5px;line-height:20px;color:#fff;letter-spacing:-0.738px;">MAINTENANCE</span>
<span class="t" style="left:375.57px;top:684px;font-size:16.5px;line-height:20px;color:#8bc1d9;letter-spacing:0.011px;">20 MHz differential probe</span>
<svg style="left:566.75px;top:686.8px;" width="17" height="14" viewBox="0 0 17 14"><path d="M10.600 1.150H3.300A2.350 2.350 0 0 0 .95 3.500v7.400a2.350 2.350 0 0 0 2.350 2.350h7.600a2.350 2.350 0 0 0 2.350-2.350V8.200" stroke="#8bc1d9" stroke-width="1.3" fill="none" stroke-linecap="round"/><path d="M14.500.400l2 2-7.200 7.200-2.700.700.700-2.700z" fill="#8bc1d9"/><path d="M13.400 1.600l1.900 1.900" stroke="#262a2e" stroke-width=".7"/></svg>
<svg style="left:596.8499999999999px;top:685.9px;" width="16.4" height="15.6" viewBox="0 0 16.4 15.6"><path d="M8.200 1.200L15.400 14.300H1z" fill="#e0354a" stroke="#e0354a" stroke-width="1.8" stroke-linejoin="round"/><rect x="7.050" y="5.200" width="2.300" height="5.100" rx=".5" fill="#24282c"/><rect x="7.050" y="11.300" width="2.300" height="2.100" rx=".4" fill="#24282c"/></svg>
<span class="t" style="left:881.57px;top:684px;font-size:16.5px;line-height:20px;color:#8bc1d9;letter-spacing:-0.058px;">Collection room (unknown)</span>
<svg style="left:1773.2px;top:688px;" width="17" height="13.2" viewBox="0 0 17 13.2"><rect x=".85" y=".85" width="15.3" height="11.5" rx="1.8" stroke="#8bc1d9" stroke-width="1.5" fill="none"/><path d="M1.2 3.2l6.2 4.7a1.9 1.9 0 0 0 2.2 0l6.2-4.7" stroke="#8bc1d9" stroke-width="1.4" fill="none"/></svg>
<div style="left:68px;top:711px;width:1787px;height:32px;background:#2c3034;"></div>
<div class="hl" style="top:742px"></div>
<span class="t" style="left:72.18px;top:719px;font-size:14.4px;line-height:18px;color:#8bc1d9;letter-spacing:0.024px;">EQ000470</span>
<div style="left:205px;top:713px;width:101.5px;height:27px;background:#ff0000;border-radius:5.6px;"></div>
<span class="t" style="left:208.97px;top:717px;font-size:16.5px;line-height:20px;color:#fff;letter-spacing:-1.248px;">IDLE_ERROR</span>
<span class="t" style="left:375.57px;top:717px;font-size:16.5px;line-height:20px;color:#8bc1d9;letter-spacing:-0.150px;">200mm Experimental Plating Head</span>
<svg style="left:632.75px;top:719.8px;" width="17" height="14" viewBox="0 0 17 14"><path d="M10.600 1.150H3.300A2.350 2.350 0 0 0 .95 3.500v7.400a2.350 2.350 0 0 0 2.350 2.350h7.600a2.350 2.350 0 0 0 2.350-2.350V8.200" stroke="#8bc1d9" stroke-width="1.3" fill="none" stroke-linecap="round"/><path d="M14.500.400l2 2-7.200 7.200-2.700.700.700-2.700z" fill="#8bc1d9"/><path d="M13.400 1.600l1.900 1.900" stroke="#262a2e" stroke-width=".7"/></svg>
<span class="t" style="left:881.57px;top:717px;font-size:16.5px;line-height:20px;color:#8bc1d9;letter-spacing:-0.150px;">Electrochemical lab (CR/2.3.205-CR/2.3.206-CR/2.3....</span>
<svg style="left:1773.2px;top:721px;" width="17" height="13.2" viewBox="0 0 17 13.2"><rect x=".85" y=".85" width="15.3" height="11.5" rx="1.8" stroke="#8bc1d9" stroke-width="1.5" fill="none"/><path d="M1.2 3.2l6.2 4.7a1.9 1.9 0 0 0 2.2 0l6.2-4.7" stroke="#8bc1d9" stroke-width="1.4" fill="none"/></svg>
<div class="hl" style="top:775px"></div>
<span class="t" style="left:72.18px;top:752px;font-size:14.4px;line-height:18px;color:#8bc1d9;letter-spacing:0.024px;">EQ000763</span>
<div style="left:177.2px;top:752px;width:13px;height:13px;background:#3b3b3b;border:1px solid #858585;border-radius:3px;box-sizing:border-box;"></div>
<div style="left:205px;top:746px;width:29.2px;height:27px;background:#92d050;border-radius:5.6px;"></div>
<span class="t" style="left:208.97px;top:750px;font-size:16.5px;line-height:20px;color:#fff;letter-spacing:-0.722px;">UP</span>
<span class="t" style="left:375.57px;top:750px;font-size:16.5px;line-height:20px;color:#8bc1d9;letter-spacing:-0.692px;">3-PORT GLOVEBOX</span>
<svg style="left:528.25px;top:752.8px;" width="17" height="14" viewBox="0 0 17 14"><path d="M10.600 1.150H3.300A2.350 2.350 0 0 0 .95 3.500v7.400a2.350 2.350 0 0 0 2.350 2.350h7.600a2.350 2.350 0 0 0 2.350-2.350V8.200" stroke="#8bc1d9" stroke-width="1.3" fill="none" stroke-linecap="round"/><path d="M14.500.400l2 2-7.200 7.200-2.700.700.700-2.700z" fill="#8bc1d9"/><path d="M13.400 1.600l1.900 1.900" stroke="#262a2e" stroke-width=".7"/></svg>
<span class="t" style="left:881.57px;top:750px;font-size:16.5px;line-height:20px;color:#8bc1d9;letter-spacing:-0.334px;">Nanolab (CR/2.2.100)</span>
<svg style="left:1773.2px;top:754px;" width="17" height="13.2" viewBox="0 0 17 13.2"><rect x=".85" y=".85" width="15.3" height="11.5" rx="1.8" stroke="#8bc1d9" stroke-width="1.5" fill="none"/><path d="M1.2 3.2l6.2 4.7a1.9 1.9 0 0 0 2.2 0l6.2-4.7" stroke="#8bc1d9" stroke-width="1.4" fill="none"/></svg>
<svg style="left:1798.6px;top:751.7px;" width="15.4" height="16.6" viewBox="0 0 15.4 16.6"><path d="M1.5 2.6h12.4a1.3 1.3 0 0 1 1.3 1.3v11.2a1.3 1.3 0 0 1-1.3 1.300H1.500A1.300 1.300 0 0 1 .2 15.100V3.900a1.300 1.300 0 0 1 1.300-1.300z" fill="#8bc1d9"/><rect x="3" y=".2" width="2.7" height="4.6" rx="1.3" fill="#8bc1d9"/><rect x="9.7" y=".2" width="2.7" height="4.6" rx="1.3" fill="#8bc1d9"/><rect x="3.95" y="1.3" width=".8" height="2.6" rx=".4" fill="#1b1e21"/><rect x="10.65" y="1.3" width=".8" height="2.6" rx=".4" fill="#1b1e21"/><rect x="1.70" y="6.40" width="1.75" height="1.75" fill="#1b1e21"/><rect x="5.15" y="6.40" width="1.75" height="1.75" fill="#1b1e21"/><rect x="8.60" y="6.40" width="1.75" height="1.75" fill="#1b1e21"/><rect x="12.05" y="6.40" width="1.75" height="1.75" fill="#1b1e21"/><rect x="1.70" y="9.70" width="1.75" height="1.75" fill="#1b1e21"/><rect x="5.15" y="9.70" width="1.75" height="1.75" fill="#1b1e21"/><rect x="8.60" y="9.70" width="1.75" height="1.75" fill="#1b1e21"/><rect x="12.05" y="9.70" width="1.75" height="1.75" fill="#1b1e21"/><rect x="1.70" y="13.00" width="1.75" height="1.75" fill="#1b1e21"/><rect x="5.15" y="13.00" width="1.75" height="1.75" fill="#1b1e21"/><rect x="8.60" y="13.00" width="1.75" height="1.75" fill="#1b1e21"/><rect x="12.05" y="13.00" width="1.75" height="1.75" fill="#1b1e21"/></svg>
<div style="left:68px;top:777px;width:1787px;height:32px;background:#2c3034;"></div>
<div class="hl" style="top:808px"></div>
<span class="t" style="left:72.18px;top:785px;font-size:14.4px;line-height:18px;color:#8bc1d9;letter-spacing:0.086px;">EQ002424</span>
<div style="left:177.2px;top:785px;width:13px;height:13px;background:#3b3b3b;border:1px solid #858585;border-radius:3px;box-sizing:border-box;"></div>
<div style="left:205px;top:779px;width:29.2px;height:27px;background:#92d050;border-radius:5.6px;"></div>
<span class="t" style="left:208.97px;top:783px;font-size:16.5px;line-height:20px;color:#fff;letter-spacing:-0.722px;">UP</span>
<span class="t" style="left:375.57px;top:783px;font-size:16.5px;line-height:20px;color:#8bc1d9;letter-spacing:-0.005px;">3D Intgrated Acousto Optics</span>
<svg style="left:587.75px;top:785.8px;" width="17" height="14" viewBox="0 0 17 14"><path d="M10.600 1.150H3.300A2.350 2.350 0 0 0 .95 3.500v7.400a2.350 2.350 0 0 0 2.350 2.350h7.600a2.350 2.350 0 0 0 2.350-2.350V8.200" stroke="#8bc1d9" stroke-width="1.3" fill="none" stroke-linecap="round"/><path d="M14.500.400l2 2-7.200 7.200-2.700.700.700-2.700z" fill="#8bc1d9"/><path d="M13.400 1.600l1.900 1.900" stroke="#262a2e" stroke-width=".7"/></svg>
<span class="t" style="left:881.57px;top:783px;font-size:16.5px;line-height:20px;color:#8bc1d9;letter-spacing:-0.200px;">Phoxonics lab (CR/2.2.207-CR/2.2.208)</span>
<svg style="left:1773.2px;top:787px;" width="17" height="13.2" viewBox="0 0 17 13.2"><rect x=".85" y=".85" width="15.3" height="11.5" rx="1.8" stroke="#8bc1d9" stroke-width="1.5" fill="none"/><path d="M1.2 3.2l6.2 4.7a1.9 1.9 0 0 0 2.2 0l6.2-4.7" stroke="#8bc1d9" stroke-width="1.4" fill="none"/></svg>
<svg style="left:1798.6px;top:784.7px;" width="15.4" height="16.6" viewBox="0 0 15.4 16.6"><path d="M1.5 2.6h12.4a1.3 1.3 0 0 1 1.3 1.3v11.2a1.3 1.3 0 0 1-1.3 1.300H1.500A1.300 1.300 0 0 1 .2 15.100V3.900a1.300 1.300 0 0 1 1.300-1.300z" fill="#8bc1d9"/><rect x="3" y=".2" width="2.7" height="4.6" rx="1.3" fill="#8bc1d9"/><rect x="9.7" y=".2" width="2.7" height="4.6" rx="1.3" fill="#8bc1d9"/><rect x="3.95" y="1.3" width=".8" height="2.6" rx=".4" fill="#1b1e21"/><rect x="10.65" y="1.3" width=".8" height="2.6" rx=".4" fill="#1b1e21"/><rect x="1.70" y="6.40" width="1.75" height="1.75" fill="#1b1e21"/><rect x="5.15" y="6.40" width="1.75" height="1.75" fill="#1b1e21"/><rect x="8.60" y="6.40" width="1.75" height="1.75" fill="#1b1e21"/><rect x="12.05" y="6.40" width="1.75" height="1.75" fill="#1b1e21"/><rect x="1.70" y="9.70" width="1.75" height="1.75" fill="#1b1e21"/><rect x="5.15" y="9.70" width="1.75" height="1.75" fill="#1b1e21"/><rect x="8.60" y="9.70" width="1.75" height="1.75" fill="#1b1e21"/><rect x="12.05" y="9.70" width="1.75" height="1.75" fill="#1b1e21"/><rect x="1.70" y="13.00" width="1.75" height="1.75" fill="#1b1e21"/><rect x="5.15" y="13.00" width="1.75" height="1.75" fill="#1b1e21"/><rect x="8.60" y="13.00" width="1.75" height="1.75" fill="#1b1e21"/><rect x="12.05" y="13.00" width="1.75" height="1.75" fill="#1b1e21"/></svg>
<div class="hl" style="top:841px"></div>
<span class="t" style="left:72.18px;top:818px;font-size:14.4px;line-height:18px;color:#8bc1d9;letter-spacing:0.086px;">EQ000525</span>
<div style="left:205px;top:812px;width:29.2px;height:27px;background:#92d050;border-radius:5.6px;"></div>
<span class="t" style="left:208.97px;top:816px;font-size:16.5px;line-height:20px;color:#fff;letter-spacing:-0.722px;">UP</span>
<span class="t" style="left:375.57px;top:816px;font-size:16.5px;line-height:20px;color:#8bc1d9;letter-spacing:-0.145px;">3D Printer</span>
<svg style="left:455.25px;top:818.8px;" width="17" height="14" viewBox="0 0 17 14"><path d="M10.600 1.150H3.300A2.350 2.350 0 0 0 .95 3.500v7.400a2.350 2.350 0 0 0 2.350 2.350h7.600a2.350 2.350 0 0 0 2.350-2.350V8.200" stroke="#8bc1d9" stroke-width="1.3" fill="none" stroke-linecap="round"/><path d="M14.500.400l2 2-7.200 7.200-2.700.700.700-2.700z" fill="#8bc1d9"/><path d="M13.400 1.600l1.900 1.900" stroke="#262a2e" stroke-width=".7"/></svg>
<span class="t" style="left:881.57px;top:816px;font-size:16.5px;line-height:20px;color:#8bc1d9;letter-spacing:-0.171px;">O-line extension (CR/2.0.25)</span>
<svg style="left:1773.2px;top:820px;" width="17" height="13.2" viewBox="0 0 17 13.2"><rect x=".85" y=".85" width="15.3" height="11.5" rx="1.8" stroke="#8bc1d9" stroke-width="1.5" fill="none"/><path d="M1.2 3.2l6.2 4.7a1.9 1.9 0 0 0 2.2 0l6.2-4.7" stroke="#8bc1d9" stroke-width="1.4" fill="none"/></svg>
<div style="left:68px;top:843px;width:1787px;height:32px;background:#2c3034;"></div>
<div class="hl" style="top:874px"></div>
<span class="t" style="left:72.18px;top:851px;font-size:14.4px;line-height:18px;color:#8bc1d9;letter-spacing:0.086px;">EQ004072</span>
<div style="left:205px;top:845px;width:77px;height:27px;background:#c0c0c0;border-radius:5.6px;"></div>
<span class="t" style="left:208.97px;top:849px;font-size:16.5px;line-height:20px;color:#fff;letter-spacing:-0.136px;">No status</span>
<span class="t" style="left:375.57px;top:849px;font-size:16.5px;line-height:20px;color:#8bc1d9;letter-spacing:0.201px;">3M 740 61-990-0740</span>
<svg style="left:539.25px;top:851.8px;" width="17" height="14" viewBox="0 0 17 14"><path d="M10.600 1.150H3.300A2.350 2.350 0 0 0 .95 3.500v7.400a2.350 2.350 0 0 0 2.350 2.350h7.600a2.350 2.350 0 0 0 2.350-2.350V8.200" stroke="#8bc1d9" stroke-width="1.3" fill="none" stroke-linecap="round"/><path d="M14.500.400l2 2-7.200 7.200-2.700.700.700-2.700z" fill="#8bc1d9"/><path d="M13.400 1.600l1.900 1.900" stroke="#262a2e" stroke-width=".7"/></svg>
<svg style="left:569.3499999999999px;top:850.9px;" width="16.4" height="15.6" viewBox="0 0 16.4 15.6"><path d="M8.200 1.200L15.400 14.300H1z" fill="#e0354a" stroke="#e0354a" stroke-width="1.8" stroke-linejoin="round"/><rect x="7.050" y="5.200" width="2.300" height="5.100" rx=".5" fill="#24282c"/><rect x="7.050" y="11.300" width="2.300" height="2.100" rx=".4" fill="#24282c"/></svg>
<span class="t" style="left:881.57px;top:849px;font-size:16.5px;line-height:20px;color:#8bc1d9;letter-spacing:-0.209px;">DSP-RF lab (I3/7.4.24.-I3/7.4.28-I3/7.4.34)</span>
<span class="t" style="left:1412.68px;top:851px;font-size:14.4px;line-height:18px;color:#afb2b6;letter-spacing:-0.215px;">I3/7.1.38.Imager Lab</span>
<svg style="left:1773.2px;top:853px;" width="17" height="13.2" viewBox="0 0 17 13.2"><rect x=".85" y=".85" width="15.3" height="11.5" rx="1.8" stroke="#8bc1d9" stroke-width="1.5" fill="none"/><path d="M1.2 3.2l6.2 4.7a1.9 1.9 0 0 0 2.2 0l6.2-4.7" stroke="#8bc1d9" stroke-width="1.4" fill="none"/></svg>
<div class="hl" style="top:907px"></div>
<span class="t" style="left:72.18px;top:884px;font-size:14.4px;line-height:18px;color:#8bc1d9;letter-spacing:0.086px;">EQ000971</span>
<div style="left:177.2px;top:884px;width:13px;height:13px;background:#3b3b3b;border:1px solid #858585;border-radius:3px;box-sizing:border-box;"></div>
<div style="left:205px;top:878px;width:29.2px;height:27px;background:#92d050;border-radius:5.6px;"></div>
<span class="t" style="left:208.97px;top:882px;font-size:16.5px;line-height:20px;color:#fff;letter-spacing:-0.722px;">UP</span>
<span class="t" style="left:375.57px;top:882px;font-size:16.5px;line-height:20px;color:#8bc1d9;letter-spacing:0.009px;">3M 740 61-990-0740 ESD tester</span>
<svg style="left:620.25px;top:884.8px;" width="17" height="14" viewBox="0 0 17 14"><path d="M10.600 1.150H3.300A2.350 2.350 0 0 0 .95 3.500v7.400a2.350 2.350 0 0 0 2.350 2.350h7.600a2.350 2.350 0 0 0 2.350-2.350V8.200" stroke="#8bc1d9" stroke-width="1.3" fill="none" stroke-linecap="round"/><path d="M14.500.400l2 2-7.200 7.200-2.700.700.700-2.700z" fill="#8bc1d9"/><path d="M13.400 1.600l1.900 1.900" stroke="#262a2e" stroke-width=".7"/></svg>
<span class="t" style="left:881.57px;top:882px;font-size:16.5px;line-height:20px;color:#8bc1d9;letter-spacing:-0.330px;">Imager lab (I3/7.1.38.-I3/7.1.38B)</span>
<svg style="left:1773.2px;top:886px;" width="17" height="13.2" viewBox="0 0 17 13.2"><rect x=".85" y=".85" width="15.3" height="11.5" rx="1.8" stroke="#8bc1d9" stroke-width="1.5" fill="none"/><path d="M1.2 3.2l6.2 4.7a1.9 1.9 0 0 0 2.2 0l6.2-4.7" stroke="#8bc1d9" stroke-width="1.4" fill="none"/></svg>
<svg style="left:1798.6px;top:883.7px;" width="15.4" height="16.6" viewBox="0 0 15.4 16.6"><path d="M1.5 2.6h12.4a1.3 1.3 0 0 1 1.3 1.3v11.2a1.3 1.3 0 0 1-1.3 1.300H1.500A1.300 1.300 0 0 1 .2 15.100V3.900a1.300 1.300 0 0 1 1.300-1.300z" fill="#8bc1d9"/><rect x="3" y=".2" width="2.7" height="4.6" rx="1.3" fill="#8bc1d9"/><rect x="9.7" y=".2" width="2.7" height="4.6" rx="1.3" fill="#8bc1d9"/><rect x="3.95" y="1.3" width=".8" height="2.6" rx=".4" fill="#1b1e21"/><rect x="10.65" y="1.3" width=".8" height="2.6" rx=".4" fill="#1b1e21"/><rect x="1.70" y="6.40" width="1.75" height="1.75" fill="#1b1e21"/><rect x="5.15" y="6.40" width="1.75" height="1.75" fill="#1b1e21"/><rect x="8.60" y="6.40" width="1.75" height="1.75" fill="#1b1e21"/><rect x="12.05" y="6.40" width="1.75" height="1.75" fill="#1b1e21"/><rect x="1.70" y="9.70" width="1.75" height="1.75" fill="#1b1e21"/><rect x="5.15" y="9.70" width="1.75" height="1.75" fill="#1b1e21"/><rect x="8.60" y="9.70" width="1.75" height="1.75" fill="#1b1e21"/><rect x="12.05" y="9.70" width="1.75" height="1.75" fill="#1b1e21"/><rect x="1.70" y="13.00" width="1.75" height="1.75" fill="#1b1e21"/><rect x="5.15" y="13.00" width="1.75" height="1.75" fill="#1b1e21"/><rect x="8.60" y="13.00" width="1.75" height="1.75" fill="#1b1e21"/><rect x="12.05" y="13.00" width="1.75" height="1.75" fill="#1b1e21"/></svg>
<div style="left:68px;top:909px;width:1787px;height:32px;background:#2c3034;"></div>
<div class="hl" style="top:940px"></div>
<span class="t" style="left:72.18px;top:917px;font-size:14.4px;line-height:18px;color:#8bc1d9;letter-spacing:0.086px;">EQ000708</span>
<div style="left:177.2px;top:917px;width:13px;height:13px;background:#3b3b3b;border:1px solid #858585;border-radius:3px;box-sizing:border-box;"></div>
<div style="left:205px;top:911px;width:85.5px;height:27px;background:#ff0000;border-radius:5.6px;"></div>
<span class="t" style="left:208.97px;top:915px;font-size:16.5px;line-height:20px;color:#fff;letter-spacing:-0.990px;">IN_REPAIR</span>
<span class="t" style="left:375.57px;top:915px;font-size:16.5px;line-height:20px;color:#8bc1d9;letter-spacing:0.043px;">3d printer - Form2</span>
<svg style="left:515.25px;top:917.8px;" width="17" height="14" viewBox="0 0 17 14"><path d="M10.600 1.150H3.300A2.350 2.350 0 0 0 .95 3.500v7.400a2.350 2.350 0 0 0 2.350 2.350h7.600a2.350 2.350 0 0 0 2.350-2.350V8.200" stroke="#8bc1d9" stroke-width="1.3" fill="none" stroke-linecap="round"/><path d="M14.500.400l2 2-7.200 7.200-2.700.700.700-2.700z" fill="#8bc1d9"/><path d="M13.400 1.600l1.900 1.900" stroke="#262a2e" stroke-width=".7"/></svg>
<span class="t" style="left:881.57px;top:915px;font-size:16.5px;line-height:20px;color:#8bc1d9;letter-spacing:-0.433px;">Life lab (I5L/12.1.01)</span>
<svg style="left:1773.2px;top:919px;" width="17" height="13.2" viewBox="0 0 17 13.2"><rect x=".85" y=".85" width="15.3" height="11.5" rx="1.8" stroke="#8bc1d9" stroke-width="1.5" fill="none"/><path d="M1.2 3.2l6.2 4.7a1.9 1.9 0 0 0 2.2 0l6.2-4.7" stroke="#8bc1d9" stroke-width="1.4" fill="none"/></svg>
<svg style="left:1798.6px;top:916.7px;" width="15.4" height="16.6" viewBox="0 0 15.4 16.6"><path d="M1.5 2.6h12.4a1.3 1.3 0 0 1 1.3 1.3v11.2a1.3 1.3 0 0 1-1.3 1.300H1.500A1.300 1.300 0 0 1 .2 15.100V3.900a1.300 1.300 0 0 1 1.300-1.300z" fill="#8bc1d9"/><rect x="3" y=".2" width="2.7" height="4.6" rx="1.3" fill="#8bc1d9"/><rect x="9.7" y=".2" width="2.7" height="4.6" rx="1.3" fill="#8bc1d9"/><rect x="3.95" y="1.3" width=".8" height="2.6" rx=".4" fill="#1b1e21"/><rect x="10.65" y="1.3" width=".8" height="2.6" rx=".4" fill="#1b1e21"/><rect x="1.70" y="6.40" width="1.75" height="1.75" fill="#1b1e21"/><rect x="5.15" y="6.40" width="1.75" height="1.75" fill="#1b1e21"/><rect x="8.60" y="6.40" width="1.75" height="1.75" fill="#1b1e21"/><rect x="12.05" y="6.40" width="1.75" height="1.75" fill="#1b1e21"/><rect x="1.70" y="9.70" width="1.75" height="1.75" fill="#1b1e21"/><rect x="5.15" y="9.70" width="1.75" height="1.75" fill="#1b1e21"/><rect x="8.60" y="9.70" width="1.75" height="1.75" fill="#1b1e21"/><rect x="12.05" y="9.70" width="1.75" height="1.75" fill="#1b1e21"/><rect x="1.70" y="13.00" width="1.75" height="1.75" fill="#1b1e21"/><rect x="5.15" y="13.00" width="1.75" height="1.75" fill="#1b1e21"/><rect x="8.60" y="13.00" width="1.75" height="1.75" fill="#1b1e21"/><rect x="12.05" y="13.00" width="1.75" height="1.75" fill="#1b1e21"/></svg>
<div class="hl" style="top:973px"></div>
<span class="t" style="left:72.18px;top:950px;font-size:14.4px;line-height:18px;color:#8bc1d9;letter-spacing:0.086px;">EQ000506</span>
<div style="left:177.2px;top:950px;width:13px;height:13px;background:#3b3b3b;border:1px solid #858585;border-radius:3px;box-sizing:border-box;"></div>
<div style="left:205px;top:944px;width:29.2px;height:27px;background:#92d050;border-radius:5.6px;"></div>
<span class="t" style="left:208.97px;top:948px;font-size:16.5px;line-height:20px;color:#fff;letter-spacing:-0.722px;">UP</span>
<span class="t" style="left:375.57px;top:948px;font-size:16.5px;line-height:20px;color:#8bc1d9;letter-spacing:-0.532px;">4 POINTS PROBE JANDEL RM3000</span>
<svg style="left:639.25px;top:950.8px;" width="17" height="14" viewBox="0 0 17 14"><path d="M10.600 1.150H3.300A2.350 2.350 0 0 0 .95 3.500v7.400a2.350 2.350 0 0 0 2.350 2.350h7.600a2.350 2.350 0 0 0 2.350-2.350V8.200" stroke="#8bc1d9" stroke-width="1.3" fill="none" stroke-linecap="round"/><path d="M14.500.400l2 2-7.200 7.200-2.700.700.700-2.700z" fill="#8bc1d9"/><path d="M13.400 1.600l1.900 1.900" stroke="#262a2e" stroke-width=".7"/></svg>
<span class="t" style="left:881.57px;top:948px;font-size:16.5px;line-height:20px;color:#8bc1d9;letter-spacing:-0.201px;">Xplore Lab (III-V Lab)</span>
<svg style="left:1773.2px;top:952px;" width="17" height="13.2" viewBox="0 0 17 13.2"><rect x=".85" y=".85" width="15.3" height="11.5" rx="1.8" stroke="#8bc1d9" stroke-width="1.5" fill="none"/><path d="M1.2 3.2l6.2 4.7a1.9 1.9 0 0 0 2.2 0l6.2-4.7" stroke="#8bc1d9" stroke-width="1.4" fill="none"/></svg>
<svg style="left:1798.6px;top:949.7px;" width="15.4" height="16.6" viewBox="0 0 15.4 16.6"><path d="M1.5 2.6h12.4a1.3 1.3 0 0 1 1.3 1.3v11.2a1.3 1.3 0 0 1-1.3 1.300H1.500A1.300 1.300 0 0 1 .2 15.100V3.900a1.300 1.300 0 0 1 1.300-1.300z" fill="#8bc1d9"/><rect x="3" y=".2" width="2.7" height="4.6" rx="1.3" fill="#8bc1d9"/><rect x="9.7" y=".2" width="2.7" height="4.6" rx="1.3" fill="#8bc1d9"/><rect x="3.95" y="1.3" width=".8" height="2.6" rx=".4" fill="#1b1e21"/><rect x="10.65" y="1.3" width=".8" height="2.6" rx=".4" fill="#1b1e21"/><rect x="1.70" y="6.40" width="1.75" height="1.75" fill="#1b1e21"/><rect x="5.15" y="6.40" width="1.75" height="1.75" fill="#1b1e21"/><rect x="8.60" y="6.40" width="1.75" height="1.75" fill="#1b1e21"/><rect x="12.05" y="6.40" width="1.75" height="1.75" fill="#1b1e21"/><rect x="1.70" y="9.70" width="1.75" height="1.75" fill="#1b1e21"/><rect x="5.15" y="9.70" width="1.75" height="1.75" fill="#1b1e21"/><rect x="8.60" y="9.70" width="1.75" height="1.75" fill="#1b1e21"/><rect x="12.05" y="9.70" width="1.75" height="1.75" fill="#1b1e21"/><rect x="1.70" y="13.00" width="1.75" height="1.75" fill="#1b1e21"/><rect x="5.15" y="13.00" width="1.75" height="1.75" fill="#1b1e21"/><rect x="8.60" y="13.00" width="1.75" height="1.75" fill="#1b1e21"/><rect x="12.05" y="13.00" width="1.75" height="1.75" fill="#1b1e21"/></svg>
<div style="left:68px;top:975px;width:1787px;height:32px;background:#2c3034;"></div>
<div class="hl" style="top:1006px"></div>
<span class="t" style="left:72.18px;top:983px;font-size:14.4px;line-height:18px;color:#8bc1d9;letter-spacing:0.086px;">EQ002079</span>
<div style="left:205px;top:977px;width:29.2px;height:27px;background:#92d050;border-radius:5.6px;"></div>
<span class="t" style="left:208.97px;top:981px;font-size:16.5px;line-height:20px;color:#fff;letter-spacing:-0.722px;">UP</span>
<span class="t" style="left:375.57px;top:981px;font-size:16.5px;line-height:20px;color:#8bc1d9;letter-spacing:-1.100px;">4P_PROBE</span>
<svg style="left:460.75px;top:983.8px;" width="17" height="14" viewBox="0 0 17 14"><path d="M10.600 1.150H3.300A2.350 2.350 0 0 0 .95 3.500v7.400a2.350 2.350 0 0 0 2.350 2.350h7.600a2.350 2.350 0 0 0 2.350-2.350V8.200" stroke="#8bc1d9" stroke-width="1.3" fill="none" stroke-linecap="round"/><path d="M14.500.400l2 2-7.200 7.200-2.700.700.700-2.700z" fill="#8bc1d9"/><path d="M13.400 1.600l1.900 1.900" stroke="#262a2e" stroke-width=".7"/></svg>
<span class="t" style="left:881.57px;top:981px;font-size:16.5px;line-height:20px;color:#8bc1d9;letter-spacing:-0.334px;">M&amp;I Lab (CR/2.2.100)</span>
<svg style="left:1773.2px;top:985px;" width="17" height="13.2" viewBox="0 0 17 13.2"><rect x=".85" y=".85" width="15.3" height="11.5" rx="1.8" stroke="#8bc1d9" stroke-width="1.5" fill="none"/><path d="M1.2 3.2l6.2 4.7a1.9 1.9 0 0 0 2.2 0l6.2-4.7" stroke="#8bc1d9" stroke-width="1.4" fill="none"/></svg>
<div class="hl" style="top:1039px"></div>
<span class="t" style="left:72.18px;top:1016px;font-size:14.4px;line-height:18px;color:#8bc1d9;letter-spacing:0.086px;">EQ000942</span>
<div style="left:177.2px;top:1016px;width:13px;height:13px;background:#3b3b3b;border:1px solid #858585;border-radius:3px;box-sizing:border-box;"></div>
<div style="left:205px;top:1010px;width:120.5px;height:27px;background:#ffc000;border-radius:5.6px;"></div>
<span class="t" style="left:208.97px;top:1014px;font-size:16.5px;line-height:20px;color:#fff;letter-spacing:-0.738px;">MAINTENANCE</span>
<span class="t" style="left:375.57px;top:1014px;font-size:16.5px;line-height:20px;color:#8bc1d9;letter-spacing:-0.084px;">8 Cell Electrolyzer setup</span>
<svg style="left:558.25px;top:1016.8px;" width="17" height="14" viewBox="0 0 17 14"><path d="M10.600 1.150H3.300A2.350 2.350 0 0 0 .95 3.500v7.400a2.350 2.350 0 0 0 2.350 2.350h7.600a2.350 2.350 0 0 0 2.350-2.350V8.200" stroke="#8bc1d9" stroke-width="1.3" fill="none" stroke-linecap="round"/><path d="M14.500.400l2 2-7.200 7.200-2.700.700.700-2.700z" fill="#8bc1d9"/><path d="M13.400 1.600l1.900 1.900" stroke="#262a2e" stroke-width=".7"/></svg>
<span class="t" style="left:881.57px;top:1014px;font-size:16.5px;line-height:20px;color:#8bc1d9;letter-spacing:-0.443px;">Volta lab (CR/2.0.14.-CR/2.0.15_CR/2.0.17.-CR/2.0....</span>
<svg style="left:1773.2px;top:1018px;" width="17" height="13.2" viewBox="0 0 17 13.2"><rect x=".85" y=".85" width="15.3" height="11.5" rx="1.8" stroke="#8bc1d9" stroke-width="1.5" fill="none"/><path d="M1.2 3.2l6.2 4.7a1.9 1.9 0 0 0 2.2 0l6.2-4.7" stroke="#8bc1d9" stroke-width="1.4" fill="none"/></svg>
<svg style="left:1798.6px;top:1015.7px;" width="15.4" height="16.6" viewBox="0 0 15.4 16.6"><path d="M1.5 2.6h12.4a1.3 1.3 0 0 1 1.3 1.3v11.2a1.3 1.3 0 0 1-1.3 1.300H1.500A1.300 1.300 0 0 1 .2 15.100V3.900a1.300 1.300 0 0 1 1.300-1.300z" fill="#8bc1d9"/><rect x="3" y=".2" width="2.7" height="4.6" rx="1.3" fill="#8bc1d9"/><rect x="9.7" y=".2" width="2.7" height="4.6" rx="1.3" fill="#8bc1d9"/><rect x="3.95" y="1.3" width=".8" height="2.6" rx=".4" fill="#1b1e21"/><rect x="10.65" y="1.3" width=".8" height="2.6" rx=".4" fill="#1b1e21"/><rect x="1.70" y="6.40" width="1.75" height="1.75" fill="#1b1e21"/><rect x="5.15" y="6.40" width="1.75" height="1.75" fill="#1b1e21"/><rect x="8.60" y="6.40" width="1.75" height="1.75" fill="#1b1e21"/><rect x="12.05" y="6.40" width="1.75" height="1.75" fill="#1b1e21"/><rect x="1.70" y="9.70" width="1.75" height="1.75" fill="#1b1e21"/><rect x="5.15" y="9.70" width="1.75" height="1.75" fill="#1b1e21"/><rect x="8.60" y="9.70" width="1.75" height="1.75" fill="#1b1e21"/><rect x="12.05" y="9.70" width="1.75" height="1.75" fill="#1b1e21"/><rect x="1.70" y="13.00" width="1.75" height="1.75" fill="#1b1e21"/><rect x="5.15" y="13.00" width="1.75" height="1.75" fill="#1b1e21"/><rect x="8.60" y="13.00" width="1.75" height="1.75" fill="#1b1e21"/><rect x="12.05" y="13.00" width="1.75" height="1.75" fill="#1b1e21"/></svg>
<div style="left:68px;top:1041px;width:1787px;height:32px;background:#2c3034;"></div>
<div class="hl" style="top:1072px"></div>
<span class="t" style="left:72.18px;top:1049px;font-size:14.4px;line-height:18px;color:#8bc1d9;letter-spacing:0.219px;">EQ001145</span>
<div style="left:177.2px;top:1049px;width:13px;height:13px;background:#3b3b3b;border:1px solid #858585;border-radius:3px;box-sizing:border-box;"></div>
<div style="left:205px;top:1043px;width:29.2px;height:27px;background:#92d050;border-radius:5.6px;"></div>
<span class="t" style="left:208.97px;top:1047px;font-size:16.5px;line-height:20px;color:#fff;letter-spacing:-0.722px;">UP</span>
<span class="t" style="left:375.57px;top:1047px;font-size:16.5px;line-height:20px;color:#8bc1d9;letter-spacing:-0.084px;">8 Cell Electrolyzer setup</span>
<svg style="left:558.25px;top:1049.8px;" width="17" height="14" viewBox="0 0 17 14"><path d="M10.600 1.150H3.300A2.350 2.350 0 0 0 .95 3.500v7.400a2.350 2.350 0 0 0 2.350 2.350h7.600a2.350 2.350 0 0 0 2.350-2.350V8.200" stroke="#8bc1d9" stroke-width="1.3" fill="none" stroke-linecap="round"/><path d="M14.500.400l2 2-7.200 7.200-2.700.700.700-2.700z" fill="#8bc1d9"/><path d="M13.400 1.600l1.900 1.900" stroke="#262a2e" stroke-width=".7"/></svg>
<span class="t" style="left:881.57px;top:1047px;font-size:16.5px;line-height:20px;color:#8bc1d9;letter-spacing:-0.443px;">Volta lab (CR/2.0.14.-CR/2.0.15_CR/2.0.17.-CR/2.0....</span>
<span class="t" style="left:1412.37px;top:1047px;font-size:16.5px;line-height:20px;color:#fff;letter-spacing:-1.055px;">1A</span>
<svg style="left:1773.2px;top:1051px;" width="17" height="13.2" viewBox="0 0 17 13.2"><rect x=".85" y=".85" width="15.3" height="11.5" rx="1.8" stroke="#8bc1d9" stroke-width="1.5" fill="none"/><path d="M1.2 3.2l6.2 4.7a1.9 1.9 0 0 0 2.2 0l6.2-4.7" stroke="#8bc1d9" stroke-width="1.4" fill="none"/></svg>
<svg style="left:1798.6px;top:1048.7px;" width="15.4" height="16.6" viewBox="0 0 15.4 16.6"><path d="M1.5 2.6h12.4a1.3 1.3 0 0 1 1.3 1.3v11.2a1.3 1.3 0 0 1-1.3 1.300H1.500A1.300 1.300 0 0 1 .2 15.100V3.900a1.300 1.300 0 0 1 1.300-1.300z" fill="#8bc1d9"/><rect x="3" y=".2" width="2.7" height="4.6" rx="1.3" fill="#8bc1d9"/><rect x="9.7" y=".2" width="2.7" height="4.6" rx="1.3" fill="#8bc1d9"/><rect x="3.95" y="1.3" width=".8" height="2.6" rx=".4" fill="#1b1e21"/><rect x="10.65" y="1.3" width=".8" height="2.6" rx=".4" fill="#1b1e21"/><rect x="1.70" y="6.40" width="1.75" height="1.75" fill="#1b1e21"/><rect x="5.15" y="6.40" width="1.75" height="1.75" fill="#1b1e21"/><rect x="8.60" y="6.40" width="1.75" height="1.75" fill="#1b1e21"/><rect x="12.05" y="6.40" width="1.75" height="1.75" fill="#1b1e21"/><rect x="1.70" y="9.70" width="1.75" height="1.75" fill="#1b1e21"/><rect x="5.15" y="9.70" width="1.75" height="1.75" fill="#1b1e21"/><rect x="8.60" y="9.70" width="1.75" height="1.75" fill="#1b1e21"/><rect x="12.05" y="9.70" width="1.75" height="1.75" fill="#1b1e21"/><rect x="1.70" y="13.00" width="1.75" height="1.75" fill="#1b1e21"/><rect x="5.15" y="13.00" width="1.75" height="1.75" fill="#1b1e21"/><rect x="8.60" y="13.00" width="1.75" height="1.75" fill="#1b1e21"/><rect x="12.05" y="13.00" width="1.75" height="1.75" fill="#1b1e21"/></svg>
<div class="hl" style="top:1105px"></div>
<span class="t" style="left:72.18px;top:1082px;font-size:14.4px;line-height:18px;color:#8bc1d9;letter-spacing:0.210px;">4530610</span>
<div style="left:205px;top:1076px;width:77px;height:27px;background:#c0c0c0;border-radius:5.6px;"></div>
<span class="t" style="left:208.97px;top:1080px;font-size:16.5px;line-height:20px;color:#fff;letter-spacing:-0.136px;">No status</span>
<span class="t" style="left:375.57px;top:1080px;font-size:16.5px;line-height:20px;color:#8bc1d9;letter-spacing:-0.391px;">81150A AWG</span>
<svg style="left:475.75px;top:1082.8px;" width="17" height="14" viewBox="0 0 17 14"><path d="M10.600 1.150H3.300A2.350 2.350 0 0 0 .95 3.500v7.400a2.350 2.350 0 0 0 2.350 2.350h7.600a2.350 2.350 0 0 0 2.350-2.350V8.200" stroke="#8bc1d9" stroke-width="1.3" fill="none" stroke-linecap="round"/><path d="M14.500.400l2 2-7.200 7.200-2.700.700.700-2.700z" fill="#8bc1d9"/><path d="M13.400 1.600l1.900 1.900" stroke="#262a2e" stroke-width=".7"/></svg>
<span class="t" style="left:881.57px;top:1080px;font-size:16.5px;line-height:20px;color:#8bc1d9;letter-spacing:-0.163px;">Amsimec reliability lab 2 (I1.2.24)</span>
<svg style="left:1773.2px;top:1084px;" width="17" height="13.2" viewBox="0 0 17 13.2"><rect x=".85" y=".85" width="15.3" height="11.5" rx="1.8" stroke="#8bc1d9" stroke-width="1.5" fill="none"/><path d="M1.2 3.2l6.2 4.7a1.9 1.9 0 0 0 2.2 0l6.2-4.7" stroke="#8bc1d9" stroke-width="1.4" fill="none"/></svg>
<div style="left:68px;top:1107px;width:1787px;height:32px;background:#2c3034;"></div>
<div class="hl" style="top:1138px"></div>
<span class="t" style="left:72.18px;top:1115px;font-size:14.4px;line-height:18px;color:#8bc1d9;letter-spacing:0.086px;">EQ005156</span>
<div style="left:205px;top:1109px;width:77px;height:27px;background:#c0c0c0;border-radius:5.6px;"></div>
<span class="t" style="left:208.97px;top:1113px;font-size:16.5px;line-height:20px;color:#fff;letter-spacing:-0.136px;">No status</span>
<span class="t" style="left:375.57px;top:1113px;font-size:16.5px;line-height:20px;color:#8bc1d9;letter-spacing:-0.072px;">89601200C Advanced vector signal analysis</span>
<svg style="left:703.25px;top:1115.8px;" width="17" height="14" viewBox="0 0 17 14"><path d="M10.600 1.150H3.300A2.350 2.350 0 0 0 .95 3.500v7.400a2.350 2.350 0 0 0 2.350 2.350h7.600a2.350 2.350 0 0 0 2.350-2.350V8.200" stroke="#8bc1d9" stroke-width="1.3" fill="none" stroke-linecap="round"/><path d="M14.500.400l2 2-7.200 7.200-2.700.700.700-2.700z" fill="#8bc1d9"/><path d="M13.400 1.600l1.900 1.900" stroke="#262a2e" stroke-width=".7"/></svg>
<svg style="left:733.3499999999999px;top:1114.9px;" width="16.4" height="15.6" viewBox="0 0 16.4 15.6"><path d="M8.200 1.200L15.400 14.300H1z" fill="#e0354a" stroke="#e0354a" stroke-width="1.8" stroke-linejoin="round"/><rect x="7.050" y="5.200" width="2.300" height="5.100" rx=".5" fill="#24282c"/><rect x="7.050" y="11.300" width="2.300" height="2.100" rx=".4" fill="#24282c"/></svg>
<span class="t" style="left:881.57px;top:1113px;font-size:16.5px;line-height:20px;color:#8bc1d9;letter-spacing:-0.209px;">DSP-RF lab (I3/7.4.24.-I3/7.4.28-I3/7.4.34)</span>
<span class="t" style="left:1412.68px;top:1115px;font-size:14.4px;line-height:18px;color:#afb2b6;letter-spacing:-0.213px;">I3/7.4.28.RF lab</span>
<svg style="left:1773.2px;top:1117px;" width="17" height="13.2" viewBox="0 0 17 13.2"><rect x=".85" y=".85" width="15.3" height="11.5" rx="1.8" stroke="#8bc1d9" stroke-width="1.5" fill="none"/><path d="M1.2 3.2l6.2 4.7a1.9 1.9 0 0 0 2.2 0l6.2-4.7" stroke="#8bc1d9" stroke-width="1.4" fill="none"/></svg>
<div class="hl" style="top:1171px"></div>
<span class="t" style="left:72.18px;top:1148px;font-size:14.4px;line-height:18px;color:#8bc1d9;letter-spacing:0.086px;">EQ005172</span>
<div style="left:205px;top:1142px;width:77px;height:27px;background:#c0c0c0;border-radius:5.6px;"></div>
<span class="t" style="left:208.97px;top:1146px;font-size:16.5px;line-height:20px;color:#fff;letter-spacing:-0.136px;">No status</span>
<span class="t" style="left:375.57px;top:1146px;font-size:16.5px;line-height:20px;color:#8bc1d9;letter-spacing:-0.121px;">89601AYAC Digital demodulation</span>
<svg style="left:621.25px;top:1148.8px;" width="17" height="14" viewBox="0 0 17 14"><path d="M10.600 1.150H3.300A2.350 2.350 0 0 0 .95 3.500v7.400a2.350 2.350 0 0 0 2.350 2.350h7.600a2.350 2.350 0 0 0 2.350-2.350V8.200" stroke="#8bc1d9" stroke-width="1.3" fill="none" stroke-linecap="round"/><path d="M14.500.400l2 2-7.200 7.200-2.700.700.700-2.700z" fill="#8bc1d9"/><path d="M13.400 1.600l1.900 1.900" stroke="#262a2e" stroke-width=".7"/></svg>
<svg style="left:651.3499999999999px;top:1147.9px;" width="16.4" height="15.6" viewBox="0 0 16.4 15.6"><path d="M8.200 1.200L15.400 14.300H1z" fill="#e0354a" stroke="#e0354a" stroke-width="1.8" stroke-linejoin="round"/><rect x="7.050" y="5.200" width="2.300" height="5.100" rx=".5" fill="#24282c"/><rect x="7.050" y="11.300" width="2.300" height="2.100" rx=".4" fill="#24282c"/></svg>
<span class="t" style="left:881.57px;top:1146px;font-size:16.5px;line-height:20px;color:#8bc1d9;letter-spacing:-0.209px;">DSP-RF lab (I3/7.4.24.-I3/7.4.28-I3/7.4.34)</span>
<span class="t" style="left:1412.68px;top:1148px;font-size:14.4px;line-height:18px;color:#afb2b6;letter-spacing:-0.213px;">I3/7.4.28.RF lab</span>
<svg style="left:1773.2px;top:1150px;" width="17" height="13.2" viewBox="0 0 17 13.2"><rect x=".85" y=".85" width="15.3" height="11.5" rx="1.8" stroke="#8bc1d9" stroke-width="1.5" fill="none"/><path d="M1.2 3.2l6.2 4.7a1.9 1.9 0 0 0 2.2 0l6.2-4.7" stroke="#8bc1d9" stroke-width="1.4" fill="none"/></svg>
<div style="left:68px;top:1173px;width:1787px;height:32px;background:#2c3034;"></div>
<div class="hl" style="top:1204px"></div>
<span class="t" style="left:72.18px;top:1181px;font-size:14.4px;line-height:18px;color:#8bc1d9;letter-spacing:0.086px;">EQ005152</span>
<div style="left:205px;top:1175px;width:77px;height:27px;background:#c0c0c0;border-radius:5.6px;"></div>
<span class="t" style="left:208.97px;top:1179px;font-size:16.5px;line-height:20px;color:#fff;letter-spacing:-0.136px;">No status</span>
<span class="t" style="left:375.57px;top:1179px;font-size:16.5px;line-height:20px;color:#8bc1d9;letter-spacing:-0.309px;">89601BHNC 89601BHNC 5G NR/5G</span>
<svg style="left:645.25px;top:1181.8px;" width="17" height="14" viewBox="0 0 17 14"><path d="M10.600 1.150H3.300A2.350 2.350 0 0 0 .95 3.500v7.400a2.350 2.350 0 0 0 2.350 2.350h7.600a2.350 2.350 0 0 0 2.350-2.350V8.200" stroke="#8bc1d9" stroke-width="1.3" fill="none" stroke-linecap="round"/><path d="M14.500.400l2 2-7.200 7.200-2.700.700.700-2.700z" fill="#8bc1d9"/><path d="M13.400 1.600l1.900 1.900" stroke="#262a2e" stroke-width=".7"/></svg>
<svg style="left:675.3499999999999px;top:1180.9px;" width="16.4" height="15.6" viewBox="0 0 16.4 15.6"><path d="M8.200 1.200L15.400 14.300H1z" fill="#e0354a" stroke="#e0354a" stroke-width="1.8" stroke-linejoin="round"/><rect x="7.050" y="5.200" width="2.300" height="5.100" rx=".5" fill="#24282c"/><rect x="7.050" y="11.300" width="2.300" height="2.100" rx=".4" fill="#24282c"/></svg>
<span class="t" style="left:881.57px;top:1179px;font-size:16.5px;line-height:20px;color:#8bc1d9;letter-spacing:-0.209px;">DSP-RF lab (I3/7.4.24.-I3/7.4.28-I3/7.4.34)</span>
<span class="t" style="left:1412.68px;top:1181px;font-size:14.4px;line-height:18px;color:#afb2b6;letter-spacing:-0.213px;">I3/7.4.28.RF lab</span>
<svg style="left:1773.2px;top:1183px;" width="17" height="13.2" viewBox="0 0 17 13.2"><rect x=".85" y=".85" width="15.3" height="11.5" rx="1.8" stroke="#8bc1d9" stroke-width="1.5" fill="none"/><path d="M1.2 3.2l6.2 4.7a1.9 1.9 0 0 0 2.2 0l6.2-4.7" stroke="#8bc1d9" stroke-width="1.4" fill="none"/></svg>
<div class="hl" style="top:1237px"></div>
<span class="t" style="left:72.18px;top:1214px;font-size:14.4px;line-height:18px;color:#8bc1d9;letter-spacing:0.086px;">EQ002470</span>
<div style="left:177.2px;top:1214px;width:13px;height:13px;background:#3b3b3b;border:1px solid #858585;border-radius:3px;box-sizing:border-box;"></div>
<div style="left:205px;top:1208px;width:29.2px;height:27px;background:#92d050;border-radius:5.6px;"></div>
<span class="t" style="left:208.97px;top:1212px;font-size:16.5px;line-height:20px;color:#fff;letter-spacing:-0.722px;">UP</span>
<span class="t" style="left:375.57px;top:1212px;font-size:16.5px;line-height:20px;color:#8bc1d9;letter-spacing:-0.304px;">ACE Sharpening tool</span>
<svg style="left:530.75px;top:1214.8px;" width="17" height="14" viewBox="0 0 17 14"><path d="M10.600 1.150H3.300A2.350 2.350 0 0 0 .95 3.500v7.400a2.350 2.350 0 0 0 2.350 2.350h7.600a2.350 2.350 0 0 0 2.350-2.350V8.200" stroke="#8bc1d9" stroke-width="1.3" fill="none" stroke-linecap="round"/><path d="M14.500.400l2 2-7.200 7.200-2.700.700.700-2.700z" fill="#8bc1d9"/><path d="M13.400 1.600l1.900 1.900" stroke="#262a2e" stroke-width=".7"/></svg>
<span class="t" style="left:881.57px;top:1212px;font-size:16.5px;line-height:20px;color:#8bc1d9;letter-spacing:-0.196px;">Characterization volume (I5/12.02.01)</span>
<span class="t" style="left:1412.37px;top:1212px;font-size:16.5px;line-height:20px;color:#fff;letter-spacing:-0.221px;">NPIX Measurement setups</span>
<svg style="left:1773.2px;top:1216px;" width="17" height="13.2" viewBox="0 0 17 13.2"><rect x=".85" y=".85" width="15.3" height="11.5" rx="1.8" stroke="#8bc1d9" stroke-width="1.5" fill="none"/><path d="M1.2 3.2l6.2 4.7a1.9 1.9 0 0 0 2.2 0l6.2-4.7" stroke="#8bc1d9" stroke-width="1.4" fill="none"/></svg>
<svg style="left:1798.6px;top:1213.7px;" width="15.4" height="16.6" viewBox="0 0 15.4 16.6"><path d="M1.5 2.6h12.4a1.3 1.3 0 0 1 1.3 1.3v11.2a1.3 1.3 0 0 1-1.3 1.300H1.500A1.300 1.300 0 0 1 .2 15.100V3.900a1.300 1.300 0 0 1 1.300-1.300z" fill="#8bc1d9"/><rect x="3" y=".2" width="2.7" height="4.6" rx="1.3" fill="#8bc1d9"/><rect x="9.7" y=".2" width="2.7" height="4.6" rx="1.3" fill="#8bc1d9"/><rect x="3.95" y="1.3" width=".8" height="2.6" rx=".4" fill="#1b1e21"/><rect x="10.65" y="1.3" width=".8" height="2.6" rx=".4" fill="#1b1e21"/><rect x="1.70" y="6.40" width="1.75" height="1.75" fill="#1b1e21"/><rect x="5.15" y="6.40" width="1.75" height="1.75" fill="#1b1e21"/><rect x="8.60" y="6.40" width="1.75" height="1.75" fill="#1b1e21"/><rect x="12.05" y="6.40" width="1.75" height="1.75" fill="#1b1e21"/><rect x="1.70" y="9.70" width="1.75" height="1.75" fill="#1b1e21"/><rect x="5.15" y="9.70" width="1.75" height="1.75" fill="#1b1e21"/><rect x="8.60" y="9.70" width="1.75" height="1.75" fill="#1b1e21"/><rect x="12.05" y="9.70" width="1.75" height="1.75" fill="#1b1e21"/><rect x="1.70" y="13.00" width="1.75" height="1.75" fill="#1b1e21"/><rect x="5.15" y="13.00" width="1.75" height="1.75" fill="#1b1e21"/><rect x="8.60" y="13.00" width="1.75" height="1.75" fill="#1b1e21"/><rect x="12.05" y="13.00" width="1.75" height="1.75" fill="#1b1e21"/></svg>
<div style="left:68px;top:1239px;width:1787px;height:32px;background:#2c3034;"></div>
<div class="hl" style="top:1270px"></div>
<span class="t" style="left:72.18px;top:1247px;font-size:14.4px;line-height:18px;color:#8bc1d9;letter-spacing:0.086px;">EQ000449</span>
<div style="left:205px;top:1241px;width:29.2px;height:27px;background:#92d050;border-radius:5.6px;"></div>
<span class="t" style="left:208.97px;top:1245px;font-size:16.5px;line-height:20px;color:#fff;letter-spacing:-0.722px;">UP</span>
<span class="t" style="left:375.57px;top:1245px;font-size:16.5px;line-height:20px;color:#8bc1d9;letter-spacing:-0.778px;">ACID WET BENCH</span>
<svg style="left:514.25px;top:1247.8px;" width="17" height="14" viewBox="0 0 17 14"><path d="M10.600 1.150H3.300A2.350 2.350 0 0 0 .95 3.500v7.400a2.350 2.350 0 0 0 2.350 2.350h7.600a2.350 2.350 0 0 0 2.350-2.350V8.200" stroke="#8bc1d9" stroke-width="1.3" fill="none" stroke-linecap="round"/><path d="M14.500.400l2 2-7.200 7.200-2.700.700.700-2.700z" fill="#8bc1d9"/><path d="M13.400 1.600l1.900 1.900" stroke="#262a2e" stroke-width=".7"/></svg>
<span class="t" style="left:881.57px;top:1245px;font-size:16.5px;line-height:20px;color:#8bc1d9;letter-spacing:-0.201px;">Xplore Lab (III-V Lab)</span>
<svg style="left:1773.2px;top:1249px;" width="17" height="13.2" viewBox="0 0 17 13.2"><rect x=".85" y=".85" width="15.3" height="11.5" rx="1.8" stroke="#8bc1d9" stroke-width="1.5" fill="none"/><path d="M1.2 3.2l6.2 4.7a1.9 1.9 0 0 0 2.2 0l6.2-4.7" stroke="#8bc1d9" stroke-width="1.4" fill="none"/></svg>
<div class="hl" style="top:1303px"></div>
<span class="t" style="left:72.18px;top:1280px;font-size:14.4px;line-height:18px;color:#8bc1d9;letter-spacing:0.086px;">EQ000467</span>
<div style="left:205px;top:1274px;width:29.2px;height:27px;background:#92d050;border-radius:5.6px;"></div>
<span class="t" style="left:208.97px;top:1278px;font-size:16.5px;line-height:20px;color:#fff;letter-spacing:-0.722px;">UP</span>
<span class="t" style="left:375.57px;top:1278px;font-size:16.5px;line-height:20px;color:#8bc1d9;letter-spacing:-0.653px;">ACID WET BENCH LITHO</span>
<svg style="left:565.25px;top:1280.8px;" width="17" height="14" viewBox="0 0 17 14"><path d="M10.600 1.150H3.300A2.350 2.350 0 0 0 .95 3.500v7.400a2.350 2.350 0 0 0 2.350 2.350h7.600a2.350 2.350 0 0 0 2.350-2.350V8.200" stroke="#8bc1d9" stroke-width="1.3" fill="none" stroke-linecap="round"/><path d="M14.500.400l2 2-7.200 7.200-2.700.700.700-2.700z" fill="#8bc1d9"/><path d="M13.400 1.600l1.900 1.900" stroke="#262a2e" stroke-width=".7"/></svg>
<span class="t" style="left:881.57px;top:1278px;font-size:16.5px;line-height:20px;color:#8bc1d9;letter-spacing:-0.201px;">Xplore Lab (III-V Lab)</span>
<svg style="left:1773.2px;top:1282px;" width="17" height="13.2" viewBox="0 0 17 13.2"><rect x=".85" y=".85" width="15.3" height="11.5" rx="1.8" stroke="#8bc1d9" stroke-width="1.5" fill="none"/><path d="M1.2 3.2l6.2 4.7a1.9 1.9 0 0 0 2.2 0l6.2-4.7" stroke="#8bc1d9" stroke-width="1.4" fill="none"/></svg>
<div style="left:68px;top:1305px;width:1787px;height:32px;background:#2c3034;"></div>
<div class="hl" style="top:1336px"></div>
<span class="t" style="left:72.18px;top:1313px;font-size:14.4px;line-height:18px;color:#8bc1d9;letter-spacing:0.086px;">EQ003472</span>
<div style="left:205px;top:1307px;width:77px;height:27px;background:#c0c0c0;border-radius:5.6px;"></div>
<span class="t" style="left:208.97px;top:1311px;font-size:16.5px;line-height:20px;color:#fff;letter-spacing:-0.136px;">No status</span>
<span class="t" style="left:375.57px;top:1311px;font-size:16.5px;line-height:20px;color:#8bc1d9;letter-spacing:-0.339px;">ADV. MICROWAVE MQ03231-21 DC-500</span>
<svg style="left:677.25px;top:1313.8px;" width="17" height="14" viewBox="0 0 17 14"><path d="M10.600 1.150H3.300A2.350 2.350 0 0 0 .95 3.500v7.400a2.350 2.350 0 0 0 2.350 2.350h7.600a2.350 2.350 0 0 0 2.350-2.350V8.200" stroke="#8bc1d9" stroke-width="1.3" fill="none" stroke-linecap="round"/><path d="M14.500.400l2 2-7.200 7.200-2.700.700.700-2.700z" fill="#8bc1d9"/><path d="M13.400 1.600l1.900 1.900" stroke="#262a2e" stroke-width=".7"/></svg>
<svg style="left:707.3499999999999px;top:1312.9px;" width="16.4" height="15.6" viewBox="0 0 16.4 15.6"><path d="M8.200 1.200L15.400 14.300H1z" fill="#e0354a" stroke="#e0354a" stroke-width="1.8" stroke-linejoin="round"/><rect x="7.050" y="5.200" width="2.300" height="5.100" rx=".5" fill="#24282c"/><rect x="7.050" y="11.300" width="2.300" height="2.100" rx=".4" fill="#24282c"/></svg>
<span class="t" style="left:881.57px;top:1311px;font-size:16.5px;line-height:20px;color:#8bc1d9;letter-spacing:-0.209px;">DSP-RF lab (I3/7.4.24.-I3/7.4.28-I3/7.4.34)</span>
<span class="t" style="left:1412.68px;top:1313px;font-size:14.4px;line-height:18px;color:#afb2b6;letter-spacing:0.232px;">D03G05</span>
<svg style="left:1773.2px;top:1315px;" width="17" height="13.2" viewBox="0 0 17 13.2"><rect x=".85" y=".85" width="15.3" height="11.5" rx="1.8" stroke="#8bc1d9" stroke-width="1.5" fill="none"/><path d="M1.2 3.2l6.2 4.7a1.9 1.9 0 0 0 2.2 0l6.2-4.7" stroke="#8bc1d9" stroke-width="1.4" fill="none"/></svg>
<div style="left:68px;top:1353.4px;width:204px;height:30.6px;border:1px solid #3d98c0;border-radius:4.500px;box-sizing:border-box;"></div>
<div style="left:76.6px;top:1361.4px;width:16px;height:17px;transform:scale(.86);transform-origin:0 0;">
<svg style="left:0px;top:0.0px;" width="15.4" height="16.6" viewBox="0 0 15.4 16.6"><path d="M1.5 2.6h12.4a1.3 1.3 0 0 1 1.3 1.3v11.2a1.3 1.3 0 0 1-1.3 1.300H1.500A1.300 1.300 0 0 1 .2 15.100V3.900a1.300 1.300 0 0 1 1.300-1.300z" fill="#4aa3c9"/><rect x="3" y=".2" width="2.7" height="4.6" rx="1.3" fill="#4aa3c9"/><rect x="9.7" y=".2" width="2.7" height="4.6" rx="1.3" fill="#4aa3c9"/><rect x="3.95" y="1.3" width=".8" height="2.6" rx=".4" fill="#1b1e21"/><rect x="10.65" y="1.3" width=".8" height="2.6" rx=".4" fill="#1b1e21"/><rect x="1.70" y="6.40" width="1.75" height="1.75" fill="#1b1e21"/><rect x="5.15" y="6.40" width="1.75" height="1.75" fill="#1b1e21"/><rect x="8.60" y="6.40" width="1.75" height="1.75" fill="#1b1e21"/><rect x="12.05" y="6.40" width="1.75" height="1.75" fill="#1b1e21"/><rect x="1.70" y="9.70" width="1.75" height="1.75" fill="#1b1e21"/><rect x="5.15" y="9.70" width="1.75" height="1.75" fill="#1b1e21"/><rect x="8.60" y="9.70" width="1.75" height="1.75" fill="#1b1e21"/><rect x="12.05" y="9.70" width="1.75" height="1.75" fill="#1b1e21"/><rect x="1.70" y="13.00" width="1.75" height="1.75" fill="#1b1e21"/><rect x="5.15" y="13.00" width="1.75" height="1.75" fill="#1b1e21"/><rect x="8.60" y="13.00" width="1.75" height="1.75" fill="#1b1e21"/><rect x="12.05" y="13.00" width="1.75" height="1.75" fill="#1b1e21"/></svg>
</div>
<span class="t" style="left:94.18px;top:1360px;font-size:14.4px;line-height:18px;color:#4aa3c9;letter-spacing:0.039px;">Create a block reservation</span>
<span class="t" style="left:68.97px;top:1402px;font-size:16.5px;line-height:20px;color:#d0d4d8;letter-spacing:-0.126px;">2705 results on 109 page(s)</span>
<div style="left:1459px;top:1400px;width:396px;height:40px;border:1px solid #3d434a;border-radius:6px;box-sizing:border-box;"></div>
<div style="left:1459px;top:1400px;width:34px;height:40px;background:#3d98c0;border-radius:6px 0 0 6px;"></div>
<span class="t" style="left:1471.71px;top:1409px;font-size:16.5px;line-height:20px;color:#fff;">1</span>
<div style="left:1492.5px;top:1401px;width:1px;height:39px;background:#3d434a;"></div>
<span class="t" style="left:1505.46px;top:1409px;font-size:16.5px;line-height:20px;color:#8bc1d9;">2</span>
<div style="left:1526.0px;top:1401px;width:1px;height:39px;background:#3d434a;"></div>
<span class="t" style="left:1539.46px;top:1409px;font-size:16.5px;line-height:20px;color:#8bc1d9;">3</span>
<div style="left:1560.5px;top:1401px;width:1px;height:39px;background:#3d434a;"></div>
<div style="left:1598.5px;top:1401px;width:1px;height:39px;background:#3d434a;"></div>
<span class="t" style="left:1611.03px;top:1409px;font-size:16.5px;line-height:20px;color:#8bc1d9;">107</span>
<div style="left:1649.5px;top:1401px;width:1px;height:39px;background:#3d434a;"></div>
<span class="t" style="left:1662.28px;top:1409px;font-size:16.5px;line-height:20px;color:#8bc1d9;">108</span>
<div style="left:1701.0px;top:1401px;width:1px;height:39px;background:#3d434a;"></div>
<span class="t" style="left:1713.78px;top:1409px;font-size:16.5px;line-height:20px;color:#8bc1d9;">109</span>
<div style="left:1752.5px;top:1401px;width:1px;height:39px;background:#3d434a;"></div>
<span class="t" style="left:1765.58px;top:1409px;font-size:16.5px;line-height:20px;color:#8bc1d9;">Next</span>
<div style="left:1811.0px;top:1401px;width:1px;height:39px;background:#3d434a;"></div>
<span class="t" style="left:1824.38px;top:1409px;font-size:16.5px;line-height:20px;color:#8bc1d9;">All</span>
<h2 class="t" style="left:1878.94px;top:313px;font-size:32.4px;line-height:38px;color:#4dbfc5;letter-spacing:-0.475px;-webkit-text-stroke:.45px #4dbfc5;">Filter</h2>
<b class="t" style="left:1880.17px;top:360px;font-size:16.5px;line-height:20px;color:#dee2e6;font-weight:700;-webkit-text-stroke:0;letter-spacing:-0.239px;">General</b>
<div style="left:1879.4px;top:386.5px;width:15.4px;height:15.4px;border:1px solid #454b52;border-radius:4px;box-sizing:border-box;background:#212529;"></div>
<span class="t" style="left:1904.27px;top:384px;font-size:16.5px;line-height:20px;color:#dee2e6;letter-spacing:-0.161px;">Equipment where I am trained on</span>
<div style="left:1879.4px;top:412.5px;width:15.4px;height:15.4px;border:1px solid #454b52;border-radius:4px;box-sizing:border-box;background:#212529;"></div>
<span class="t" style="left:1904.27px;top:410px;font-size:16.5px;line-height:20px;color:#dee2e6;letter-spacing:-0.138px;">Responsible on equipment</span>
<div style="left:1879.4px;top:438.5px;width:15.4px;height:15.4px;border:1px solid #454b52;border-radius:4px;box-sizing:border-box;background:#212529;"></div>
<span class="t" style="left:1904.27px;top:436px;font-size:16.5px;line-height:20px;color:#dee2e6;letter-spacing:-0.031px;">Include inactive equipment</span>
<div style="left:1879.4px;top:464.5px;width:15.4px;height:15.4px;border:1px solid #454b52;border-radius:4px;box-sizing:border-box;background:#212529;"></div>
<span class="t" style="left:1904.27px;top:462px;font-size:16.5px;line-height:20px;color:#dee2e6;letter-spacing:-0.149px;">Reserved equipment</span>
<div style="left:1879.4px;top:490.5px;width:15.4px;height:15.4px;border:1px solid #454b52;border-radius:4px;box-sizing:border-box;background:#212529;"></div>
<span class="t" style="left:1904.27px;top:488px;font-size:16.5px;line-height:20px;color:#dee2e6;letter-spacing:-0.114px;">Processing possible</span>
<div style="left:1879.4px;top:516.5px;width:15.4px;height:15.4px;border:1px solid #454b52;border-radius:4px;box-sizing:border-box;background:#212529;"></div>
<span class="t" style="left:1904.27px;top:514px;font-size:16.5px;line-height:20px;color:#dee2e6;letter-spacing:-0.127px;">Training is possible</span>
<div style="left:1879.4px;top:542.5px;width:15.4px;height:15.4px;border:1px solid #454b52;border-radius:4px;box-sizing:border-box;background:#212529;"></div>
<span class="t" style="left:1904.27px;top:540px;font-size:16.5px;line-height:20px;color:#dee2e6;letter-spacing:-0.155px;">Reservation possible</span>
<div style="left:1879.4px;top:568.5px;width:15.4px;height:15.4px;border:1px solid #454b52;border-radius:4px;box-sizing:border-box;background:#212529;"></div>
<span class="t" style="left:1904.27px;top:566px;font-size:16.5px;line-height:20px;color:#dee2e6;letter-spacing:-0.111px;">Rented equipment</span>
<div style="left:1879.4px;top:594.5px;width:15.4px;height:15.4px;border:1px solid #454b52;border-radius:4px;box-sizing:border-box;background:#212529;"></div>
<span class="t" style="left:1904.27px;top:592px;font-size:16.5px;line-height:20px;color:#dee2e6;letter-spacing:-0.122px;">Only rentals</span>
<b class="t" style="left:1880.17px;top:632px;font-size:16.5px;line-height:20px;color:#dee2e6;font-weight:700;-webkit-text-stroke:0;letter-spacing:0.006px;">Category</b>
<div style="left:1879.4px;top:658.5px;width:15.4px;height:15.4px;border:1px solid #454b52;border-radius:4px;box-sizing:border-box;background:#212529;"></div>
<span class="t" style="left:1904.27px;top:656px;font-size:16.5px;line-height:20px;color:#dee2e6;letter-spacing:-0.066px;">Characterization</span>
<span class="t" style="left:2028.49px;top:659px;font-size:13.8px;line-height:17px;color:#cdd1d5;letter-spacing:0.353px;">(220)</span>
<div style="left:1879.4px;top:684.5px;width:15.4px;height:15.4px;border:1px solid #454b52;border-radius:4px;box-sizing:border-box;background:#212529;"></div>
<span class="t" style="left:1904.27px;top:682px;font-size:16.5px;line-height:20px;color:#dee2e6;letter-spacing:-0.517px;">Class DIGITAL</span>
<span class="t" style="left:2011.49px;top:685px;font-size:13.8px;line-height:17px;color:#cdd1d5;letter-spacing:-0.464px;">(1)</span>
<div style="left:1879.4px;top:710.5px;width:15.4px;height:15.4px;border:1px solid #454b52;border-radius:4px;box-sizing:border-box;background:#212529;"></div>
<span class="t" style="left:1904.27px;top:708px;font-size:16.5px;line-height:20px;color:#dee2e6;letter-spacing:-0.579px;">Class LAB_TABLE</span>
<span class="t" style="left:2037.99px;top:711px;font-size:13.8px;line-height:17px;color:#cdd1d5;letter-spacing:0.203px;">(2)</span>
<div style="left:1879.4px;top:736.5px;width:15.4px;height:15.4px;border:1px solid #454b52;border-radius:4px;box-sizing:border-box;background:#212529;"></div>
<span class="t" style="left:1904.27px;top:734px;font-size:16.5px;line-height:20px;color:#dee2e6;letter-spacing:-0.776px;">Class PROBE</span>
<span class="t" style="left:2004.49px;top:737px;font-size:13.8px;line-height:17px;color:#cdd1d5;letter-spacing:-0.464px;">(1)</span>
<div style="left:1879.4px;top:762.5px;width:15.4px;height:15.4px;border:1px solid #454b52;border-radius:4px;box-sizing:border-box;background:#212529;"></div>
<span class="t" style="left:1904.27px;top:760px;font-size:16.5px;line-height:20px;color:#dee2e6;letter-spacing:-0.725px;">Class V_I_OHM_METER_-_GENERATOR</span>
<span class="t" style="left:2198.99px;top:763px;font-size:13.8px;line-height:17px;color:#cdd1d5;letter-spacing:0.203px;">(2)</span>
<div style="left:1879.4px;top:788.5px;width:15.4px;height:15.4px;border:1px solid #454b52;border-radius:4px;box-sizing:border-box;background:#212529;"></div>
<span class="t" style="left:1904.27px;top:786px;font-size:16.5px;line-height:20px;color:#dee2e6;letter-spacing:0.016px;">Computer</span>
<span class="t" style="left:1981.99px;top:789px;font-size:13.8px;line-height:17px;color:#cdd1d5;letter-spacing:0.203px;">(8)</span>
<div style="left:1879.4px;top:814.5px;width:15.4px;height:15.4px;border:1px solid #454b52;border-radius:4px;box-sizing:border-box;background:#212529;"></div>
<span class="t" style="left:1904.27px;top:812px;font-size:16.5px;line-height:20px;color:#dee2e6;letter-spacing:-0.046px;">Controlled environment</span>
<span class="t" style="left:2078.99px;top:815px;font-size:13.8px;line-height:17px;color:#cdd1d5;letter-spacing:0.359px;">(26)</span>
<div style="left:1879.4px;top:840.5px;width:15.4px;height:15.4px;border:1px solid #454b52;border-radius:4px;box-sizing:border-box;background:#212529;"></div>
<span class="t" style="left:1904.27px;top:838px;font-size:16.5px;line-height:20px;color:#dee2e6;letter-spacing:-0.034px;">Dry processing</span>
<span class="t" style="left:2018.99px;top:841px;font-size:13.8px;line-height:17px;color:#cdd1d5;letter-spacing:0.203px;">(4)</span>
<div style="left:1879.4px;top:866.5px;width:15.4px;height:15.4px;border:1px solid #454b52;border-radius:4px;box-sizing:border-box;background:#212529;"></div>
<span class="t" style="left:1904.27px;top:864px;font-size:16.5px;line-height:20px;color:#dee2e6;letter-spacing:-0.168px;">General lab supply</span>
<span class="t" style="left:2043.99px;top:867px;font-size:13.8px;line-height:17px;color:#cdd1d5;letter-spacing:0.109px;">(27)</span>
<div style="left:1879.4px;top:892.5px;width:15.4px;height:15.4px;border:1px solid #454b52;border-radius:4px;box-sizing:border-box;background:#212529;"></div>
<span class="t" style="left:1904.27px;top:890px;font-size:16.5px;line-height:20px;color:#dee2e6;letter-spacing:-0.258px;">Pump</span>
<span class="t" style="left:1951.49px;top:893px;font-size:13.8px;line-height:17px;color:#cdd1d5;letter-spacing:0.203px;">(3)</span>
<span class="t" style="left:1880.47px;top:916px;font-size:16.5px;line-height:20px;color:#8bc1d9;letter-spacing:-0.175px;">View More</span>
<b class="t" style="left:1880.17px;top:956px;font-size:16.5px;line-height:20px;color:#dee2e6;font-weight:700;-webkit-text-stroke:0;letter-spacing:0.320px;">Type</b>
<div style="left:1879.4px;top:982.5px;width:15.4px;height:15.4px;border:1px solid #454b52;border-radius:4px;box-sizing:border-box;background:#212529;"></div>
<span class="t" style="left:1904.27px;top:980px;font-size:16.5px;line-height:20px;color:#dee2e6;letter-spacing:-0.511px;">ALD</span>
<span class="t" style="left:1939.99px;top:983px;font-size:13.8px;line-height:17px;color:#cdd1d5;letter-spacing:0.203px;">(2)</span>
<div style="left:1879.4px;top:1008.5px;width:15.4px;height:15.4px;border:1px solid #454b52;border-radius:4px;box-sizing:border-box;background:#212529;"></div>
<span class="t" style="left:1904.27px;top:1006px;font-size:16.5px;line-height:20px;color:#dee2e6;letter-spacing:-0.234px;">Analysis</span>
<span class="t" style="left:1968.99px;top:1009px;font-size:13.8px;line-height:17px;color:#cdd1d5;letter-spacing:0.234px;">(79)</span>
<div style="left:1879.4px;top:1034.5px;width:15.4px;height:15.4px;border:1px solid #454b52;border-radius:4px;box-sizing:border-box;background:#212529;"></div>
<span class="t" style="left:1904.27px;top:1032px;font-size:16.5px;line-height:20px;color:#dee2e6;letter-spacing:0.094px;">Centrifuge</span>
<span class="t" style="left:1986.49px;top:1035px;font-size:13.8px;line-height:17px;color:#cdd1d5;letter-spacing:0.203px;">(3)</span>
<div style="left:1879.4px;top:1060.5px;width:15.4px;height:15.4px;border:1px solid #454b52;border-radius:4px;box-sizing:border-box;background:#212529;"></div>
<span class="t" style="left:1904.27px;top:1058px;font-size:16.5px;line-height:20px;color:#dee2e6;letter-spacing:-0.145px;">Chemical/Solvent</span>
<span class="t" style="left:2035.49px;top:1061px;font-size:13.8px;line-height:17px;color:#cdd1d5;letter-spacing:0.359px;">(20)</span>
<div style="left:1879.4px;top:1086.5px;width:15.4px;height:15.4px;border:1px solid #454b52;border-radius:4px;box-sizing:border-box;background:#212529;"></div>
<span class="t" style="left:1904.27px;top:1084px;font-size:16.5px;line-height:20px;color:#dee2e6;letter-spacing:-0.195px;">Cleaning</span>
<span class="t" style="left:1972.99px;top:1087px;font-size:13.8px;line-height:17px;color:#cdd1d5;letter-spacing:-0.464px;">(1)</span>
<div style="left:1879.4px;top:1112.5px;width:15.4px;height:15.4px;border:1px solid #454b52;border-radius:4px;box-sizing:border-box;background:#212529;"></div>
<span class="t" style="left:1904.27px;top:1110px;font-size:16.5px;line-height:20px;color:#dee2e6;letter-spacing:-0.109px;">Climate chamber</span>
<span class="t" style="left:2032.49px;top:1113px;font-size:13.8px;line-height:17px;color:#cdd1d5;letter-spacing:0.203px;">(5)</span>
<div style="left:1879.4px;top:1138.5px;width:15.4px;height:15.4px;border:1px solid #454b52;border-radius:4px;box-sizing:border-box;background:#212529;"></div>
<span class="t" style="left:1904.27px;top:1136px;font-size:16.5px;line-height:20px;color:#dee2e6;letter-spacing:-0.172px;">Coaters</span>
<span class="t" style="left:1965.99px;top:1139px;font-size:13.8px;line-height:17px;color:#cdd1d5;letter-spacing:0.203px;">(3)</span>
<div style="left:1879.4px;top:1164.5px;width:15.4px;height:15.4px;border:1px solid #454b52;border-radius:4px;box-sizing:border-box;background:#212529;"></div>
<span class="t" style="left:1904.27px;top:1162px;font-size:16.5px;line-height:20px;color:#dee2e6;letter-spacing:0.016px;">Computer</span>
<span class="t" style="left:1981.99px;top:1165px;font-size:13.8px;line-height:17px;color:#cdd1d5;letter-spacing:0.203px;">(8)</span>
<div style="left:1879.4px;top:1190.5px;width:15.4px;height:15.4px;border:1px solid #454b52;border-radius:4px;box-sizing:border-box;background:#212529;"></div>
<span class="t" style="left:1904.27px;top:1188px;font-size:16.5px;line-height:20px;color:#dee2e6;letter-spacing:-0.077px;">Computerscreens</span>
<span class="t" style="left:2038.49px;top:1191px;font-size:13.8px;line-height:17px;color:#cdd1d5;letter-spacing:-0.464px;">(1)</span>
<div style="left:1879.4px;top:1216.5px;width:15.4px;height:15.4px;border:1px solid #454b52;border-radius:4px;box-sizing:border-box;background:#212529;"></div>
<span class="t" style="left:1904.27px;top:1214px;font-size:16.5px;line-height:20px;color:#dee2e6;letter-spacing:-0.033px;">Cooled storage (fridge, freezer, ...)</span>
<span class="t" style="left:2159.49px;top:1217px;font-size:13.8px;line-height:17px;color:#cdd1d5;letter-spacing:0.203px;">(7)</span>
<span class="t" style="left:1880.47px;top:1240px;font-size:16.5px;line-height:20px;color:#8bc1d9;letter-spacing:-0.175px;">View More</span>
<div id="rim"></div>
</div>
</body></html>
